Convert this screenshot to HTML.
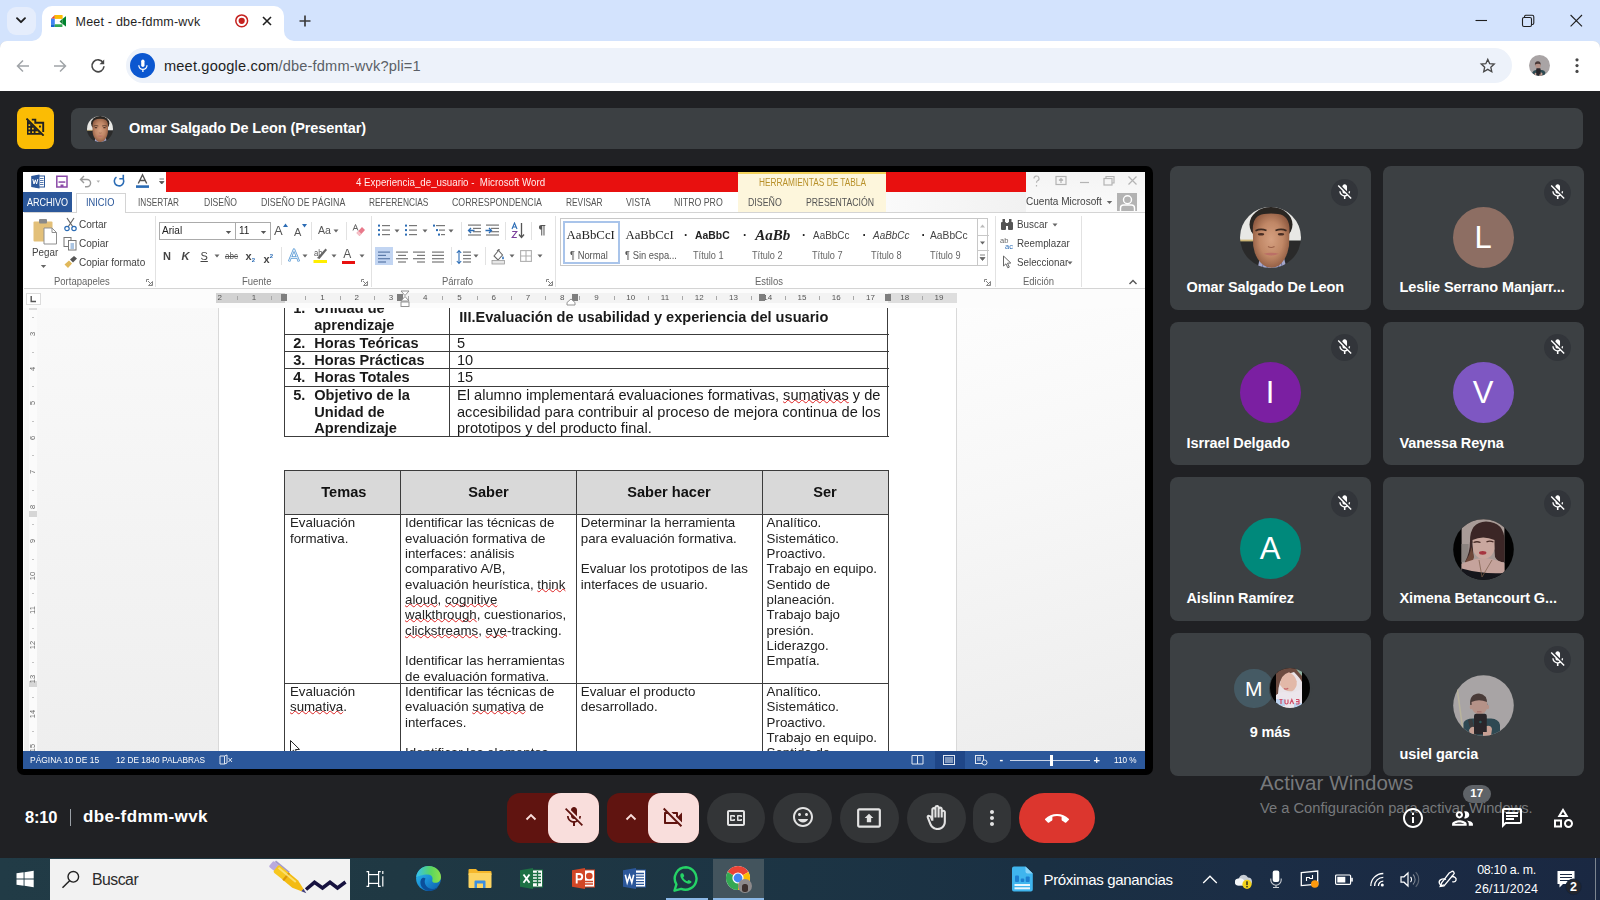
<!DOCTYPE html>
<html lang="es">
<head>
<meta charset="utf-8">
<title>Meet - dbe-fdmm-wvk</title>
<style>
*{box-sizing:border-box;margin:0;padding:0}
html,body{width:1600px;height:900px;overflow:hidden;background:#202124;font-family:"Liberation Sans",sans-serif;}
.abs{position:absolute}
#root{position:relative;width:1600px;height:900px;overflow:hidden}
/* chrome */
#tabstrip{left:0;top:0;width:1600px;height:52px;background:#d3e3fd}
#toolbar{left:0;top:41px;width:1600px;height:49.500px;background:#fff;border-radius:7px 7px 0 0;box-shadow:0 0.5px 0 0.5px #d5d7da}
#tab{left:42px;top:6px;width:242px;height:35px;background:#fff;border-radius:10px 10px 0 0}
#urlbar{left:126px;top:48px;width:1386px;height:35px;border-radius:18px;background:#edf2fa}
/* meet */
#meet{left:0;top:90.700px;width:1600px;height:767.800px;background:#202124}
.tile{background:#3c4043;border-radius:8px}
.tname{color:#fff;font-weight:bold;font-size:14.5px;white-space:nowrap;letter-spacing:-0.1px}
.micoff{width:27px;height:27px;border-radius:50%;background:#32353a;margin-left:0.3px}
.av{border-radius:50%;color:#fff;text-align:center}
.sq{text-decoration:underline wavy #d22 0.8px;text-underline-offset:-0.5px;text-decoration-skip-ink:none}
/* taskbar */
#taskbar{left:0;top:858.300px;width:1600px;height:41.700px;background:linear-gradient(90deg,#213b46 0%,#1f3843 25%,#1c3444 50%,#1a3043 65%,#1b2d45 78%,#1a2842 100%)}
</style>
</head>
<body>
<div id="root">
<!-- CHROME -->
<div id="tabstrip" class="abs"></div>
<div id="toolbar" class="abs"></div>
<div class="abs" style="left:7px;top:7px;width:29px;height:28px;border-radius:9px;background:#e5edfc"></div>
<svg class="abs" style="left:15px;top:16px" width="12" height="9" viewBox="0 0 12 9"><path d="M2 2.2 L6 6.2 L10 2.2" fill="none" stroke="#1f1f1f" stroke-width="1.9" stroke-linecap="round" stroke-linejoin="round"/></svg>
<div id="tab" class="abs"></div>
<svg class="abs" style="left:32px;top:31px" width="10" height="10" viewBox="0 0 10 10"><path d="M0 10 H10 V0 A10 10 0 0 1 0 10Z" fill="#fff"/></svg>
<svg class="abs" style="left:284px;top:31px" width="10" height="10" viewBox="0 0 10 10"><path d="M10 10 H0 V0 A10 10 0 0 0 10 10Z" fill="#fff"/></svg>
<!-- favicon -->
<svg class="abs" style="left:50.500px;top:14.500px" width="15.700" height="12.800" viewBox="0 0 16.500 14" preserveAspectRatio="none">
<path d="M0 4 L4 0 V4Z" fill="#ea4335"/>
<rect x="4" y="0" width="8" height="4" fill="#fbbc04"/>
<path d="M4 0 H11 a1 1 0 0 1 1 1 V4 H4Z" fill="#fbbc04"/>
<rect x="0" y="4" width="4" height="6" fill="#4285f4"/>
<path d="M0 10 H4 V14 H1 a1 1 0 0 1-1-1Z" fill="#1967d2"/>
<path d="M4 10 H12 V13 a1 1 0 0 1-1 1 H4Z" fill="#34a853"/>
<path d="M9 7 L12 4 V10Z" fill="#188038"/>
<path d="M12 4.3 L15.6 1.4 q0.6-.4 .6 .4 V12.2 q0 .8-.6 .4 L12 9.700Z" fill="#00832d"/>
<path d="M9 4 H12 V10 H9 L9 7Z" fill="#00ac47" opacity="0"/>
</svg>
<div class="abs" style="left:75.500px;top:13.500px;font-size:12.500px;letter-spacing:0.22px;color:#1f1f1f;white-space:nowrap;line-height:16px" id="tabtitle">Meet - dbe-fdmm-wvk</div>
<svg class="abs" style="left:234px;top:13px" width="16" height="16" viewBox="0 0 16 16"><circle cx="7.7" cy="7.8" r="5.9" fill="none" stroke="#c5221f" stroke-width="1.5"/><circle cx="7.7" cy="7.8" r="3.1" fill="#c5221f"/></svg>
<svg class="abs" style="left:261px;top:15px" width="12" height="12" viewBox="0 0 12 12"><path d="M2 2 L10 10 M10 2 L2 10" stroke="#1f1f1f" stroke-width="1.6" stroke-linecap="butt"/></svg>
<svg class="abs" style="left:298px;top:14px" width="14" height="14" viewBox="0 0 14 14"><path d="M7 1.5 V12.500 M1.500 7 H12.500" stroke="#3c3c3c" stroke-width="1.7"/></svg>
<!-- window controls -->
<svg class="abs" style="left:1470px;top:10px" width="120" height="22" viewBox="0 0 120 22">
<path d="M5.500 10.500 H17" stroke="#1f1f1f" stroke-width="1.100"/>
<rect x="52.500" y="7.500" width="9" height="9" rx="1.500" fill="none" stroke="#1f1f1f" stroke-width="1.100"/>
<path d="M54.500 7.500 V6.700 a1.500 1.500 0 0 1 1.500 -1.500 H62.300 a1.500 1.500 0 0 1 1.500 1.500 V13 a1.500 1.500 0 0 1 -1.500 1.500 H61.500" fill="none" stroke="#1f1f1f" stroke-width="1.100"/>
<path d="M100.600 5 L112 16.300 M112 5 L100.600 16.300" stroke="#1f1f1f" stroke-width="1.100"/>
</svg>
<!-- nav -->
<svg class="abs" style="left:15px;top:58px" width="16" height="16" viewBox="0 0 16 16"><path d="M14 8 H2.800 M8 2.500 L2.500 8 L8 13.500" fill="none" stroke="#a0a4a8" stroke-width="1.500"/></svg>
<svg class="abs" style="left:52px;top:58px" width="16" height="16" viewBox="0 0 16 16"><path d="M2 8 H13.200 M8 2.500 L13.500 8 L8 13.500" fill="none" stroke="#a0a4a8" stroke-width="1.500"/></svg>
<svg class="abs" style="left:89px;top:57px" width="18" height="18" viewBox="0 0 18 18"><path d="M14.200 5.800 A6 6 0 1 0 15 9.300" fill="none" stroke="#474747" stroke-width="1.600"/><path d="M15.200 2.500 V7.200 H10.500Z" fill="#474747"/></svg>
<div id="urlbar" class="abs"></div>
<div class="abs" style="left:130px;top:53px;width:25px;height:25px;border-radius:50%;background:#0b57d0"></div>
<svg class="abs" style="left:136px;top:58px" width="14" height="16" viewBox="0 0 14 16"><rect x="5.200" y="1.500" width="3.300" height="7.500" rx="1.650" fill="#fff"/><path d="M2.800 7.300 a4.100 4.100 0 0 0 8.200 0 M6.900 11.400 V14" fill="none" stroke="#fff" stroke-width="1.300"/></svg>
<div class="abs" style="left:164px;top:56px;font-size:14.600px;letter-spacing:0.17px;color:#1f1f1f;white-space:nowrap;line-height:20px" id="urltext">meet.google.com<span style="color:#5a5f66">/dbe-fdmm-wvk?pli=1</span></div>
<svg class="abs" style="left:1478.900px;top:56.800px" width="17.500" height="17.500" viewBox="0 0 20 20"><path d="M10 2.700 L12.200 7.600 L17.400 8.100 L13.500 11.600 L14.600 16.800 L10 14.100 L5.400 16.800 L6.500 11.600 L2.600 8.100 L7.800 7.600Z" fill="none" stroke="#474747" stroke-width="1.500" stroke-linejoin="miter"/></svg>
<svg class="abs" style="left:1529px;top:55px" width="21" height="21" viewBox="0 0 61 61"><defs><clipPath id="cpp"><circle cx="30.500" cy="30.500" r="30.500"/></clipPath></defs><g clip-path="url(#cpp)"><rect width="61" height="61" fill="#a9a4a5"/><path d="M10.500 61 V50 Q12 44 20 43.500 H38 Q46 44 47 50 V61Z" fill="#2e4a52"/><path d="M17.200 30 Q16 19 26 18.500 Q34.500 19 34.300 30Z" fill="#4a3a38"/><path d="M18.500 27 Q26 23.500 34 27 L34 33 Q33 38.500 26.500 39.500 Q20 38.500 18.800 33Z" fill="#b59288"/><rect x="21" y="38.700" width="12.800" height="20.500" rx="2.200" fill="#29262a"/><path d="M16 55 Q18 51 21 52 V60 H17Z M33.800 51 Q38 50 39 54 L38 61 H30 V57 H33.800Z" fill="#c7a094"/></g></svg>
<svg class="abs" style="left:1573px;top:56px" width="8" height="20" viewBox="0 0 8 20"><circle cx="4" cy="3.800" r="1.600" fill="#474747"/><circle cx="4" cy="9.600" r="1.600" fill="#474747"/><circle cx="4" cy="15.400" r="1.600" fill="#474747"/></svg>
<!-- MEET -->
<div id="meet" class="abs"></div>
<div class="abs" style="left:16.700px;top:107.200px;width:37.500px;height:42px;border-radius:8px;background:#fbbc04"></div>
<svg class="abs" style="left:26px;top:117.800px" width="18.500" height="18.500" viewBox="0 0 18.500 18.500"><path d="M1 2.200 L15.500 16.700 H1Z" fill="#1f2023"/><g fill="#fbbc04"><rect x="2.500" y="6.300" width="1.700" height="1.700"/><rect x="2.500" y="9.800" width="1.700" height="1.700"/><rect x="6" y="9.800" width="1.700" height="1.700"/><rect x="2.500" y="13.300" width="1.700" height="1.700"/><rect x="6" y="13.300" width="1.700" height="1.700"/><rect x="9.500" y="13.300" width="3" height="1.700"/></g><path d="M5.800 1.600 H9.300 V4.800 H17.200 V14" fill="none" stroke="#1f2023" stroke-width="1.900"/><rect x="13" y="7.600" width="1.900" height="1.900" fill="#1f2023"/><path d="M.5 .6 L17.600 17.700" stroke="#1f2023" stroke-width="1.900"/></svg>
<div class="abs" style="left:71px;top:107.600px;width:1512.300px;height:41.200px;border-radius:8px;background:#3c4043"></div>
<svg class="abs" id="av-hdr2" style="left:87.300px;top:115.500px" width="26" height="26" viewBox="0 0 61 61"><defs><clipPath id="cph"><circle cx="30.500" cy="30.500" r="30.500"/></clipPath><radialGradient id="skh" cx="50%" cy="48%" r="58%"><stop offset="0" stop-color="#d5a080"/><stop offset=".55" stop-color="#c08766"/><stop offset="1" stop-color="#8a563d"/></radialGradient><filter id="blh" x="-10%" y="-10%" width="120%" height="120%"><feGaussianBlur stdDeviation="1.1"/></filter></defs><g clip-path="url(#cph)"><g filter="url(#blh)"><rect x="-3" y="-3" width="67" height="67" fill="#e8e8e5"/><rect x="-3" y="33.500" width="67" height="32" fill="#2a2c2b"/><rect x="-2" y="32.600" width="15" height="1.800" fill="#cdb574"/><path d="M17 64 L21 46 H43 L47 64Z" fill="#a3a6cb"/><path d="M22 64 L24 50 M27 64 L27.500 52 M39 64 L37 50 M43 64 L40 50" stroke="#6f7299" stroke-width="1"/><ellipse cx="31" cy="17.500" rx="21.500" ry="17.500" fill="#2b2623"/><path d="M12.800 23 Q12.500 8.500 24 7 Q31 5.800 38 7 Q49.500 8.500 49.500 23 L49 39 Q47 52 39 58.500 Q31 63 24 58.500 Q15 52 13.200 39Z" fill="url(#skh)"/><path d="M15.500 23.800 Q20.500 21.300 26.500 23.500 M35.500 23.500 Q41.500 21.300 46.500 23.800" fill="none" stroke="#3b2920" stroke-width="1.700"/><ellipse cx="21" cy="27.300" rx="3.200" ry="1.200" fill="#4a2f25"/><ellipse cx="41" cy="27.300" rx="3.200" ry="1.200" fill="#4a2f25"/><path d="M28 39.500 Q31 41.500 34.500 39.500" fill="none" stroke="#9a6048" stroke-width="1.200"/><path d="M23.500 46.800 Q31 44.800 39 46.800 Q31 50.300 23.500 46.800Z" fill="#bb6f66"/></g></g></svg>
<div class="abs tname" id="hdrname" style="left:129px;top:119px;line-height:18px">Omar Salgado De Leon (Presentar)</div>
<!-- WORD -->
<div class="abs" style="left:17px;top:166px;width:1135.5px;height:608.700px;border-radius:7px;background:#000"></div>
<div id="word" class="abs" style="left:0;top:0;width:1600px;height:900px;clip-path:inset(171.5px 455px 131px 23px);filter:blur(0.35px)">
<div class="abs" style="left:23px;top:171.5px;width:1122px;height:597.5px;background:#fff"></div>
<div class="abs" style="left:166px;top:171.5px;width:859.5px;height:20.5px;background:#e8100f"></div>
<div class="abs" style="left:1025.5px;top:171.5px;width:119.5px;height:40.5px;background:linear-gradient(180deg,#f4f4f4,#fbfbfb)"></div>
<div class="abs" style="left:885.5px;top:192px;width:140px;height:20px;background:linear-gradient(90deg,#fafafa,#f1f1f1)"></div>
<div class="abs" style="left:738px;top:171.5px;width:147.5px;height:40.5px;background:#fdf6dc"></div>
<div class="abs" style="left:738px;top:171.5px;width:147.5px;height:2px;background:#f3d25a"></div>
<div class="abs " style="left:356px;top:175.95px;font-size:10.2px;line-height:13.3px;color:#ffecec;white-space:nowrap;transform:scaleX(0.955);transform-origin:left center;">4 Experiencia_de_usuario -&nbsp; Microsoft Word</div>
<div class="abs " style="left:758.5px;top:175.5px;font-size:10px;line-height:13.0px;color:#b8912a;white-space:nowrap;transform:scaleX(0.83);transform-origin:left center;">HERRAMIENTAS DE TABLA</div>
<svg class="abs" style="left:30px;top:172.500px" width="135" height="17" viewBox="0 0 135 17">
<rect x="6" y="3" width="8.500" height="11" fill="#fff" stroke="#2b579a" stroke-width="1"/><path d="M10 5.500 h3.500 M10 7.500 h3.500 M10 9.500 h3.500 M10 11.500 h3.500" stroke="#2b579a" stroke-width=".8"/><path d="M1.200 3 L9.500 1.500 V15.500 L1.200 14Z" fill="#2b579a"/><path d="M2.800 6 L4 11 L5.300 6.800 L6.600 11 L7.800 6" fill="none" stroke="#fff" stroke-width="1"/>
<path d="M26.800 3.300 H37 V14 H26.800Z" fill="none" stroke="#8a4aa8" stroke-width="1.500"/><rect x="28.500" y="8.300" width="6.800" height="1.500" fill="#8a4aa8"/><rect x="30.500" y="11.500" width="3" height="2.500" fill="#8a4aa8"/>
<path d="M50.500 6.500 H57 a3.600 3.600 0 0 1 0 7.200 H55 M54 3 L50.500 6.500 L54 10" fill="none" stroke="#9a9a9a" stroke-width="1.400"/><path d="M66.500 7.500 h3.600 l-1.800 2.200z" fill="#b0b0b0"/>
<path d="M92.500 5 a4.700 4.700 0 1 1 -6 -.8 M93.300 1.800 V5.800 H89.300" fill="none" stroke="#2b6cb5" stroke-width="1.600"/>
<path d="M108.300 10.500 L112.500 1.800 L116.700 10.500 M110 7.500 H115" fill="none" stroke="#555" stroke-width="1.400"/><rect x="106" y="12.300" width="13" height="2.600" fill="#2b6cb5"/>
<path d="M129.500 6 h4.500 M129.500 8.500 h4.500 l-2.250 2.500z" fill="#555" stroke="#555" stroke-width=".8"/>
</svg>
<svg class="abs" style="left:1028px;top:173px" width="115" height="17" viewBox="0 0 115 17"><g fill="none" stroke="#b4b4b4" stroke-width="1.200"><path d="M6 5.500 a2.500 2.500 0 1 1 3.500 2.300 q-1 .5 -1 2 M8.500 12 v1.500"/><rect x="28" y="3.500" width="10" height="8"/><path d="M33 10 V6 M31 7.500 L33 5.500 L35 7.500"/><path d="M52 9.500 H61"/><rect x="76" y="5.500" width="8" height="6.500"/><path d="M78 5.500 V3.500 H86 V10 H84"/><path d="M100.500 3.500 L108.500 11.500 M108.500 3.500 L100.500 11.500"/></g></svg>
<div class="abs" style="left:23px;top:192px;width:48.5px;height:20px;background:#2b579a"></div>
<div class="abs" style="left:75.5px;top:192.5px;width:50.5px;height:20px;background:#fff;border:1px solid #d4d4d4;border-bottom:none"></div>
<div class="abs" style="left:23.5px;top:212px;width:1121.5px;height:1px;background:#d4d4d4"></div>
<div class="abs" style="left:76.5px;top:212px;width:48.5px;height:1px;background:#fff"></div>
<div class="abs " style="left:26.9px;top:195.55px;font-size:10.4px;line-height:13.5px;color:#fff;white-space:nowrap;transform:scaleX(0.868);transform-origin:left center;">ARCHIVO</div>
<div class="abs " style="left:85.6px;top:195.55px;font-size:10.4px;line-height:13.5px;color:#2b579a;white-space:nowrap;transform:scaleX(0.894);transform-origin:left center;">INICIO</div>
<div class="abs " style="left:138.4px;top:195.55px;font-size:10.4px;line-height:13.5px;color:#555;white-space:nowrap;transform:scaleX(0.793);transform-origin:left center;">INSERTAR</div>
<div class="abs " style="left:203.5px;top:195.55px;font-size:10.4px;line-height:13.5px;color:#555;white-space:nowrap;transform:scaleX(0.828);transform-origin:left center;">DISEÑO</div>
<div class="abs " style="left:260.7px;top:195.55px;font-size:10.4px;line-height:13.5px;color:#555;white-space:nowrap;transform:scaleX(0.849);transform-origin:left center;">DISEÑO DE PÁGINA</div>
<div class="abs " style="left:368.6px;top:195.55px;font-size:10.4px;line-height:13.5px;color:#555;white-space:nowrap;transform:scaleX(0.804);transform-origin:left center;">REFERENCIAS</div>
<div class="abs " style="left:451.8px;top:195.55px;font-size:10.4px;line-height:13.5px;color:#555;white-space:nowrap;transform:scaleX(0.847);transform-origin:left center;">CORRESPONDENCIA</div>
<div class="abs " style="left:566px;top:195.55px;font-size:10.4px;line-height:13.5px;color:#555;white-space:nowrap;transform:scaleX(0.802);transform-origin:left center;">REVISAR</div>
<div class="abs " style="left:625.5px;top:195.55px;font-size:10.4px;line-height:13.5px;color:#555;white-space:nowrap;transform:scaleX(0.838);transform-origin:left center;">VISTA</div>
<div class="abs " style="left:674px;top:195.55px;font-size:10.4px;line-height:13.5px;color:#555;white-space:nowrap;transform:scaleX(0.844);transform-origin:left center;">NITRO PRO</div>
<div class="abs " style="left:748px;top:195.55px;font-size:10.4px;line-height:13.5px;color:#555;white-space:nowrap;transform:scaleX(0.848);transform-origin:left center;">DISEÑO</div>
<div class="abs " style="left:806px;top:195.55px;font-size:10.4px;line-height:13.5px;color:#555;white-space:nowrap;transform:scaleX(0.837);transform-origin:left center;">PRESENTACIÓN</div>
<div class="abs " style="left:1026.2px;top:195.3px;font-size:10.3px;line-height:13.4px;color:#444;white-space:nowrap;transform:scaleX(0.975);transform-origin:left center;">Cuenta Microsoft</div>
<svg class="abs" style="left:1106px;top:200px" width="7" height="5" viewBox="0 0 7 5"><path d="M.8 1 h5.400 l-2.700 3z" fill="#666"/></svg>
<div class="abs" style="left:1117px;top:192.5px;width:20px;height:18.5px;background:#b3b3b3"></div>
<svg class="abs" style="left:1117px;top:192.500px" width="20" height="18.500" viewBox="0 0 20 18.500"><circle cx="10.500" cy="6.800" r="4" fill="none" stroke="#fff" stroke-width="1.400"/><path d="M3.500 18.500 V15 a3 3 0 0 1 3 -3 H14.500 a3 3 0 0 1 3 3 V18.500" fill="none" stroke="#fff" stroke-width="1.400"/></svg>
<div class="abs" style="left:23.5px;top:288px;width:1121.5px;height:1px;background:#d4d4d4"></div>
<div class="abs" style="left:155.3px;top:216px;width:1px;height:71px;background:#e2e2e2"></div>
<div class="abs" style="left:371.2px;top:216px;width:1px;height:71px;background:#e2e2e2"></div>
<div class="abs" style="left:555.4px;top:216px;width:1px;height:71px;background:#e2e2e2"></div>
<div class="abs" style="left:994.7px;top:216px;width:1px;height:71px;background:#e2e2e2"></div>
<div class="abs" style="left:1081px;top:216px;width:1px;height:71px;background:#e2e2e2"></div>
<div class="abs " style="left:54.4px;top:274.85px;font-size:10.2px;line-height:13.3px;color:#666;white-space:nowrap;transform:scaleX(0.93);transform-origin:left center;">Portapapeles</div>
<div class="abs " style="left:241.8px;top:274.85px;font-size:10.2px;line-height:13.3px;color:#666;white-space:nowrap;transform:scaleX(0.93);transform-origin:left center;">Fuente</div>
<div class="abs " style="left:441.6px;top:274.85px;font-size:10.2px;line-height:13.3px;color:#666;white-space:nowrap;transform:scaleX(0.93);transform-origin:left center;">Párrafo</div>
<div class="abs " style="left:755.3px;top:274.85px;font-size:10.2px;line-height:13.3px;color:#666;white-space:nowrap;transform:scaleX(0.93);transform-origin:left center;">Estilos</div>
<div class="abs " style="left:1022.5px;top:274.85px;font-size:10.2px;line-height:13.3px;color:#666;white-space:nowrap;transform:scaleX(0.93);transform-origin:left center;">Edición</div>
<svg class="abs" style="left:145.5px;top:278.500px" width="7" height="7" viewBox="0 0 7 7"><path d="M.5 3 V.5 H3 M6.500 2.500 V6.500 H2.500Z M2 2 L5.500 5.500" fill="none" stroke="#777" stroke-width=".9"/></svg>
<svg class="abs" style="left:360.8px;top:278.500px" width="7" height="7" viewBox="0 0 7 7"><path d="M.5 3 V.5 H3 M6.500 2.500 V6.500 H2.500Z M2 2 L5.500 5.500" fill="none" stroke="#777" stroke-width=".9"/></svg>
<svg class="abs" style="left:545.5px;top:278.500px" width="7" height="7" viewBox="0 0 7 7"><path d="M.5 3 V.5 H3 M6.500 2.500 V6.500 H2.500Z M2 2 L5.500 5.500" fill="none" stroke="#777" stroke-width=".9"/></svg>
<svg class="abs" style="left:984.3px;top:278.500px" width="7" height="7" viewBox="0 0 7 7"><path d="M.5 3 V.5 H3 M6.500 2.500 V6.500 H2.500Z M2 2 L5.500 5.500" fill="none" stroke="#777" stroke-width=".9"/></svg>
<svg class="abs" style="left:1128px;top:278px" width="10" height="8" viewBox="0 0 10 8"><path d="M1.500 6 L5 2.500 L8.500 6" fill="none" stroke="#555" stroke-width="1.400"/></svg>
<svg class="abs" style="left:32px;top:218px" width="27" height="27" viewBox="0 0 27 27"><rect x="1.500" y="3.500" width="19" height="20" rx="1" fill="#e3c079"/><rect x="7" y="1" width="8" height="4.500" rx="1" fill="#8a8a8a"/><path d="M12 10 H20 L24.500 14.500 V26 H12Z" fill="#fff" stroke="#8f8f8f" stroke-width="1"/><path d="M20 10 V14.500 H24.500" fill="none" stroke="#8f8f8f" stroke-width="1"/></svg>
<div class="abs " style="left:31.6px;top:246.3px;font-size:10.6px;line-height:13.8px;color:#444;white-space:nowrap;transform:scaleX(0.93);transform-origin:left center;">Pegar</div>
<svg class="abs" style="left:40px;top:263.500px" width="7" height="5" viewBox="0 0 7 5"><path d="M.8 1 h5.400 l-2.700 3z" fill="#666"/></svg>
<svg class="abs" style="left:63px;top:217px" width="15" height="15" viewBox="0 0 15 15"><path d="M4 1 L10 10 M11 1 L5 10" stroke="#666" stroke-width="1.200"/><circle cx="4" cy="11.500" r="2.200" fill="none" stroke="#2b6cb5" stroke-width="1.200"/><circle cx="11" cy="11.500" r="2.200" fill="none" stroke="#2b6cb5" stroke-width="1.200"/></svg>
<svg class="abs" style="left:63px;top:236px" width="15" height="15" viewBox="0 0 15 15"><rect x="1" y="1.500" width="7" height="9" fill="#fff" stroke="#777" stroke-width="1"/><rect x="5.500" y="4.500" width="7.500" height="9.500" fill="#fff" stroke="#777" stroke-width="1"/><path d="M7.500 8 h3.500 M7.500 10 h3.500 M7.500 12 h3.500" stroke="#2b6cb5" stroke-width=".8"/></svg>
<svg class="abs" style="left:63px;top:255px" width="15" height="15" viewBox="0 0 15 15"><path d="M1.500 9.500 L6 5.500 L9 8.500 L5 13Z" fill="#e0b85a"/><path d="M7 4.500 L11 1 L14 3.500 L10 7.500Z" fill="#555"/></svg>
<div class="abs " style="left:79.4px;top:218.1px;font-size:10.6px;line-height:13.8px;color:#444;white-space:nowrap;transform:scaleX(0.95);transform-origin:left center;">Cortar</div>
<div class="abs " style="left:79.4px;top:236.9px;font-size:10.6px;line-height:13.8px;color:#444;white-space:nowrap;transform:scaleX(0.95);transform-origin:left center;">Copiar</div>
<div class="abs " style="left:79.4px;top:255.7px;font-size:10.6px;line-height:13.8px;color:#444;white-space:nowrap;transform:scaleX(0.945);transform-origin:left center;">Copiar formato</div>
<div class="abs" style="left:159px;top:221.8px;width:76.5px;height:18.7px;border:1px solid #ababab;background:#fff"></div>
<div class="abs" style="left:235.5px;top:221.8px;width:35.3px;height:18.7px;border:1px solid #ababab;border-left:none;background:#fff"></div>
<div class="abs " style="left:161.5px;top:224.3px;font-size:10.6px;line-height:13.8px;color:#222;white-space:nowrap;transform:scaleX(0.95);transform-origin:left center;">Arial</div>
<div class="abs " style="left:238.5px;top:224.3px;font-size:10.6px;line-height:13.8px;color:#222;white-space:nowrap;transform:scaleX(0.95);transform-origin:left center;">11</div>
<svg class="abs" style="left:224.5px;top:229.500px" width="7" height="5" viewBox="0 0 7 5"><path d="M.8 1 h5.400 l-2.700 3z" fill="#555"/></svg>
<svg class="abs" style="left:260.0px;top:229.500px" width="7" height="5" viewBox="0 0 7 5"><path d="M.8 1 h5.400 l-2.700 3z" fill="#555"/></svg>
<div class="abs " style="left:274px;top:222.55px;font-size:13px;line-height:16.9px;color:#555;white-space:nowrap;">A</div>
<svg class="abs" style="left:283px;top:223px" width="5" height="4" viewBox="0 0 5 4"><path d="M0 4 h5 l-2.500 -3.500z" fill="#2b6cb5"/></svg>
<div class="abs " style="left:294px;top:224.85px;font-size:11px;line-height:14.3px;color:#555;white-space:nowrap;">A</div>
<svg class="abs" style="left:301.500px;top:223.500px" width="5" height="4" viewBox="0 0 5 4"><path d="M0 0 h5 l-2.500 3.500z" fill="#2b6cb5"/></svg>
<div class="abs" style="left:311px;top:222px;width:1px;height:18px;background:#e2e2e2"></div>
<div class="abs " style="left:317.8px;top:223.0px;font-size:11.5px;line-height:15.0px;color:#555;white-space:nowrap;transform:scaleX(0.92);transform-origin:left center;">Aa</div>
<svg class="abs" style="left:332.6px;top:229px" width="6" height="4" viewBox="0 0 6 4"><path d="M.5 .5 h5 l-2.500 3z" fill="#666"/></svg>
<div class="abs" style="left:346px;top:222px;width:1px;height:18px;background:#e2e2e2"></div>
<svg class="abs" style="left:352px;top:223px" width="14" height="14" viewBox="0 0 14 14"><path d="M1 7.500 L3.500 1.500 L6 7.500 M2 5.500 H5" fill="none" stroke="#666" stroke-width="1"/><path d="M4.500 10 L10 4 L13 7 L7.500 13Z" fill="#e8798a"/><path d="M4.500 10 L6.500 8 L9.500 11 L7.500 13Z" fill="#f4c2c9"/></svg>
<div class="abs " style="left:163px;top:249.05px;font-size:11px;line-height:14.3px;color:#444;white-space:nowrap;font-weight:bold;">N</div>
<div class="abs " style="left:181.5px;top:249.05px;font-size:11px;line-height:14.3px;color:#444;white-space:nowrap;font-weight:bold;font-style:italic;">K</div>
<div class="abs " style="left:200.5px;top:249.05px;font-size:11px;line-height:14.3px;color:#444;white-space:nowrap;text-decoration:underline;">S</div>
<svg class="abs" style="left:214px;top:254px" width="6" height="4" viewBox="0 0 6 4"><path d="M.5 .5 h5 l-2.500 3z" fill="#666"/></svg>
<div class="abs " style="left:225px;top:250.05px;font-size:9.5px;line-height:12.3px;color:#555;white-space:nowrap;text-decoration:line-through;transform:scaleX(0.85);transform-origin:left center;">abc</div>
<div class="abs " style="left:245.5px;top:249.05px;font-size:11px;line-height:14.3px;color:#444;white-space:nowrap;font-weight:bold;">x<span style="font-size:6px;color:#2b6cb5;vertical-align:-2px">2</span></div>
<div class="abs " style="left:263.5px;top:249.05px;font-size:11px;line-height:14.3px;color:#444;white-space:nowrap;font-weight:bold;">x<span style="font-size:6px;color:#2b6cb5;vertical-align:5px">2</span></div>
<div class="abs" style="left:281px;top:247px;width:1px;height:18px;background:#e2e2e2"></div>
<svg class="abs" style="left:286.500px;top:248px" width="14" height="15" viewBox="0 0 14 15"><path d="M2 13.500 L7 1.500 L12 13.500 M4 9.500 H10" fill="none" stroke="#5b9bd5" stroke-width="2.400" stroke-linejoin="round"/><path d="M2 13.500 L7 1.500 L12 13.500 M4 9.500 H10" fill="none" stroke="#fff" stroke-width=".8"/></svg>
<svg class="abs" style="left:302px;top:254px" width="6" height="4" viewBox="0 0 6 4"><path d="M.5 .5 h5 l-2.500 3z" fill="#666"/></svg>
<div class="abs " style="left:314px;top:247.95px;font-size:8.5px;line-height:11.1px;color:#555;white-space:nowrap;transform:scaleX(0.9);transform-origin:left center;">ab</div>
<svg class="abs" style="left:313px;top:247px" width="15" height="17" viewBox="0 0 15 17"><path d="M4 11 L12.500 1.500 L14 3 L6.500 12Z" fill="#666"/><rect x=".5" y="13" width="13.500" height="3" fill="#ffee00"/></svg>
<svg class="abs" style="left:331px;top:254px" width="6" height="4" viewBox="0 0 6 4"><path d="M.5 .5 h5 l-2.500 3z" fill="#666"/></svg>
<div class="abs " style="left:343.3px;top:246.7px;font-size:12px;line-height:15.6px;color:#555;white-space:nowrap;">A</div>
<div class="abs" style="left:341.8px;top:260.5px;width:13px;height:3px;background:#e8100f"></div>
<svg class="abs" style="left:359px;top:254px" width="6" height="4" viewBox="0 0 6 4"><path d="M.5 .5 h5 l-2.500 3z" fill="#666"/></svg>
<svg class="abs" style="left:377.8px;top:223.3px" width="14" height="14" viewBox="0 0 14 14"><rect x="4" y="2" width="8" height="1.200" fill="#777"/><rect x="4" y="6.5" width="8" height="1.200" fill="#777"/><rect x="4" y="11" width="8" height="1.200" fill="#777"/><rect x="0" y="1.6" width="2" height="2" fill="#2b6cb5"/><rect x="0" y="6.1" width="2" height="2" fill="#2b6cb5"/><rect x="0" y="10.6" width="2" height="2" fill="#2b6cb5"/></svg>
<svg class="abs" style="left:394.2px;top:229px" width="6" height="4" viewBox="0 0 6 4"><path d="M.5 .5 h5 l-2.500 3z" fill="#666"/></svg>
<svg class="abs" style="left:405.4px;top:223.3px" width="14" height="14" viewBox="0 0 14 14"><rect x="4" y="2" width="8" height="1.200" fill="#777"/><rect x="4" y="6.5" width="8" height="1.200" fill="#777"/><rect x="4" y="11" width="8" height="1.200" fill="#777"/><rect x="0" y="1.6" width="2" height="2" fill="#2b6cb5"/><rect x="0" y="6.1" width="2" height="2" fill="#2b6cb5"/><rect x="0" y="10.6" width="2" height="2" fill="#2b6cb5"/></svg>
<svg class="abs" style="left:422px;top:229px" width="6" height="4" viewBox="0 0 6 4"><path d="M.5 .5 h5 l-2.500 3z" fill="#666"/></svg>
<svg class="abs" style="left:433px;top:223.3px" width="14" height="14" viewBox="0 0 14 14"><rect x="3" y="2" width="9" height="1.200" fill="#777"/><rect x="6" y="6.5" width="6" height="1.200" fill="#777"/><rect x="8" y="11" width="4" height="1.200" fill="#777"/><rect x="0" y="1.6" width="2" height="2" fill="#2b6cb5"/><rect x="3" y="6.1" width="2" height="2" fill="#2b6cb5"/><rect x="5" y="10.6" width="2" height="2" fill="#2b6cb5"/></svg>
<svg class="abs" style="left:448.4px;top:229px" width="6" height="4" viewBox="0 0 6 4"><path d="M.5 .5 h5 l-2.500 3z" fill="#666"/></svg>
<div class="abs" style="left:461px;top:222px;width:1px;height:18px;background:#e2e2e2"></div>
<svg class="abs" style="left:467.8px;top:223.3px" width="14" height="14" viewBox="0 0 14 14"><rect x="0" y="1.5" width="13" height="1.200" fill="#777"/><rect x="5" y="4.8" width="8" height="1.200" fill="#777"/><rect x="5" y="8.1" width="8" height="1.200" fill="#777"/><rect x="0" y="11.4" width="13" height="1.200" fill="#777"/></svg>
<svg class="abs" style="left:466.500px;top:227px" width="8" height="7" viewBox="0 0 8 7"><path d="M7.500 3.500 H1.500 M4 1 L1.500 3.500 L4 6" fill="none" stroke="#2b6cb5" stroke-width="1.300"/></svg>
<svg class="abs" style="left:485.6px;top:223.3px" width="14" height="14" viewBox="0 0 14 14"><rect x="0" y="1.5" width="13" height="1.200" fill="#777"/><rect x="5" y="4.8" width="8" height="1.200" fill="#777"/><rect x="5" y="8.1" width="8" height="1.200" fill="#777"/><rect x="0" y="11.4" width="13" height="1.200" fill="#777"/></svg>
<svg class="abs" style="left:484.500px;top:227px" width="8" height="7" viewBox="0 0 8 7"><path d="M.5 3.500 H6.500 M4 1 L6.500 3.500 L4 6" fill="none" stroke="#2b6cb5" stroke-width="1.300"/></svg>
<div class="abs" style="left:504.7px;top:222px;width:1px;height:18px;background:#e2e2e2"></div>
<svg class="abs" style="left:511px;top:222px" width="15" height="17" viewBox="0 0 15 17"><path d="M1 7 L3.500 1 L6 7 M2 5 H5" fill="none" stroke="#2b6cb5" stroke-width="1.100"/><path d="M1.200 9.500 H5.800 L1.200 15.500 H5.800" fill="none" stroke="#7a3d9a" stroke-width="1.100"/><path d="M10.500 1 V15 M8 12.500 L10.500 15.500 L13 12.500" fill="none" stroke="#555" stroke-width="1.300"/></svg>
<div class="abs" style="left:530.6px;top:222px;width:1px;height:18px;background:#e2e2e2"></div>
<div class="abs " style="left:538.5px;top:221.55px;font-size:13px;line-height:16.9px;color:#555;white-space:nowrap;font-weight:bold;">¶</div>
<div class="abs" style="left:374.6px;top:247.2px;width:18.2px;height:18.2px;background:#c2d5f2"></div>
<svg class="abs" style="left:377.5px;top:249.5px" width="14" height="14" viewBox="0 0 14 14"><rect x="0" y="1.5" width="12" height="1.200" fill="#5a79a8"/><rect x="0" y="4.8" width="8" height="1.200" fill="#5a79a8"/><rect x="0" y="8.1" width="12" height="1.200" fill="#5a79a8"/><rect x="0" y="11.4" width="8" height="1.200" fill="#5a79a8"/></svg>
<svg class="abs" style="left:396px;top:249.5px" width="14" height="14" viewBox="0 0 14 14"><rect x="0" y="1.5" width="12" height="1.200" fill="#777"/><rect x="2" y="4.8" width="8" height="1.200" fill="#777"/><rect x="0" y="8.1" width="12" height="1.200" fill="#777"/><rect x="2" y="11.4" width="8" height="1.200" fill="#777"/></svg>
<svg class="abs" style="left:413.4px;top:249.5px" width="14" height="14" viewBox="0 0 14 14"><rect x="0" y="1.5" width="12" height="1.200" fill="#777"/><rect x="4" y="4.8" width="8" height="1.200" fill="#777"/><rect x="0" y="8.1" width="12" height="1.200" fill="#777"/><rect x="4" y="11.4" width="8" height="1.200" fill="#777"/></svg>
<svg class="abs" style="left:431.6px;top:249.5px" width="14" height="14" viewBox="0 0 14 14"><rect x="0" y="1.5" width="12" height="1.200" fill="#777"/><rect x="0" y="4.8" width="12" height="1.200" fill="#777"/><rect x="0" y="8.1" width="12" height="1.200" fill="#777"/><rect x="0" y="11.4" width="12" height="1.200" fill="#777"/></svg>
<div class="abs" style="left:451px;top:247px;width:1px;height:18px;background:#e2e2e2"></div>
<svg class="abs" style="left:460.5px;top:249.5px" width="14" height="14" viewBox="0 0 14 14"><rect x="2" y="1.5" width="8" height="1.200" fill="#777"/><rect x="2" y="4.8" width="8" height="1.200" fill="#777"/><rect x="2" y="8.1" width="8" height="1.200" fill="#777"/><rect x="2" y="11.4" width="8" height="1.200" fill="#777"/></svg>
<svg class="abs" style="left:456px;top:248.500px" width="6" height="16" viewBox="0 0 6 16"><path d="M3 1.500 V14.500 M.8 4 L3 1.500 L5.200 4 M.8 12 L3 14.500 L5.200 12" fill="none" stroke="#2b6cb5" stroke-width="1.100"/></svg>
<svg class="abs" style="left:472.6px;top:254px" width="6" height="4" viewBox="0 0 6 4"><path d="M.5 .5 h5 l-2.500 3z" fill="#666"/></svg>
<div class="abs" style="left:485.2px;top:247px;width:1px;height:18px;background:#e2e2e2"></div>
<svg class="abs" style="left:490.500px;top:247.500px" width="15" height="17" viewBox="0 0 15 17"><path d="M3 8 L7.500 2.500 L11.500 7 L7 12Z" fill="#fff" stroke="#666" stroke-width="1.100"/><path d="M6 3 a2 2 0 0 1 3 -1" fill="none" stroke="#666" stroke-width="1"/><path d="M12 8 q1.800 2.500 0 3.500 q-1.800 -1 0 -3.500z" fill="#2b6cb5"/><rect x="1" y="12.500" width="12.500" height="3.500" fill="#e6e6e6" stroke="#999" stroke-width=".8"/></svg>
<svg class="abs" style="left:508.6px;top:254px" width="6" height="4" viewBox="0 0 6 4"><path d="M.5 .5 h5 l-2.500 3z" fill="#666"/></svg>
<svg class="abs" style="left:520px;top:250px" width="12" height="12" viewBox="0 0 12 12"><rect x=".6" y=".6" width="10.800" height="10.800" fill="none" stroke="#b0b0b0" stroke-width="1.100"/><path d="M6 .6 V11.400 M.6 6 H11.400" stroke="#b0b0b0" stroke-width="1.100"/></svg>
<svg class="abs" style="left:536.6px;top:254px" width="6" height="4" viewBox="0 0 6 4"><path d="M.5 .5 h5 l-2.500 3z" fill="#666"/></svg>
<div class="abs" style="left:560.3px;top:217.7px;width:428.2px;height:48.6px;border:1px solid #c8c8c8;background:#fff"></div>
<div class="abs" style="left:976.6px;top:217.7px;width:1px;height:48.6px;background:#c8c8c8"></div>
<div class="abs" style="left:976.6px;top:235.3px;width:12px;height:1px;background:#c8c8c8"></div>
<div class="abs" style="left:976.6px;top:250.3px;width:12px;height:1px;background:#c8c8c8"></div>
<svg class="abs" style="left:979px;top:223px" width="7" height="40" viewBox="0 0 7 40"><path d="M1 4.500 h5 l-2.500 -3z" fill="#bbb"/><path d="M1 18.500 h5 l-2.500 3z" fill="#666"/><path d="M1 32 h5 M1 34.500 h5 l-2.500 3z" fill="#666" stroke="#666" stroke-width=".8"/></svg>
<div class="abs" style="left:562.8px;top:221px;width:57px;height:42.5px;border:2px solid #a9c4ea;background:#fff"></div>
<div class="abs st1" style="left:566.5px;top:227.1px;font-size:12.8px;line-height:16.6px;color:#222;white-space:nowrap;font-family:'Liberation Serif',serif;transform:scaleX(1.0);transform-origin:left center;">AaBbCcI</div>
<div class="abs " style="left:570.2px;top:249.35px;font-size:10.2px;line-height:13.3px;color:#555;white-space:nowrap;transform:scaleX(0.92);transform-origin:left center;">¶ Normal</div>
<div class="abs st2" style="left:625.4px;top:227.1px;font-size:12.8px;line-height:16.6px;color:#222;white-space:nowrap;font-family:'Liberation Serif',serif;">AaBbCcI</div>
<div class="abs " style="left:624.6px;top:249.35px;font-size:10.2px;line-height:13.3px;color:#555;white-space:nowrap;transform:scaleX(0.92);transform-origin:left center;">¶ Sin espa...</div>
<div class="abs " style="left:684px;top:227.6px;font-size:12px;line-height:15.6px;color:#222;white-space:nowrap;font-weight:bold;">·</div>
<div class="abs " style="left:695.3px;top:228.1px;font-size:11.2px;line-height:14.6px;color:#222;white-space:nowrap;font-weight:bold;transform:scaleX(0.93);transform-origin:left center;">AaBbC</div>
<div class="abs " style="left:693.4px;top:249.35px;font-size:10.2px;line-height:13.3px;color:#666;white-space:nowrap;transform:scaleX(0.9);transform-origin:left center;">Título 1</div>
<div class="abs " style="left:743px;top:227.6px;font-size:12px;line-height:15.6px;color:#222;white-space:nowrap;font-weight:bold;">·</div>
<div class="abs " style="left:755.3px;top:225.85px;font-size:15px;line-height:19.5px;color:#222;white-space:nowrap;font-family:'Liberation Serif',serif;font-weight:bold;font-style:italic;transform:scaleX(1.0);transform-origin:left center;">AaBb</div>
<div class="abs " style="left:752px;top:249.35px;font-size:10.2px;line-height:13.3px;color:#666;white-space:nowrap;transform:scaleX(0.9);transform-origin:left center;">Título 2</div>
<div class="abs " style="left:802px;top:227.6px;font-size:12px;line-height:15.6px;color:#222;white-space:nowrap;font-weight:bold;">·</div>
<div class="abs " style="left:813.4px;top:228.4px;font-size:10.8px;line-height:14.0px;color:#444;white-space:nowrap;transform:scaleX(0.92);transform-origin:left center;">AaBbCc</div>
<div class="abs " style="left:811.6px;top:249.35px;font-size:10.2px;line-height:13.3px;color:#666;white-space:nowrap;transform:scaleX(0.9);transform-origin:left center;">Título 7</div>
<div class="abs " style="left:862.5px;top:227.6px;font-size:12px;line-height:15.6px;color:#222;white-space:nowrap;font-weight:bold;">·</div>
<div class="abs " style="left:872.5px;top:228.4px;font-size:10.8px;line-height:14.0px;color:#444;white-space:nowrap;font-style:italic;transform:scaleX(0.92);transform-origin:left center;">AaBbCc</div>
<div class="abs " style="left:870.6px;top:249.35px;font-size:10.2px;line-height:13.3px;color:#666;white-space:nowrap;transform:scaleX(0.9);transform-origin:left center;">Título 8</div>
<div class="abs " style="left:921.5px;top:227.6px;font-size:12px;line-height:15.6px;color:#222;white-space:nowrap;font-weight:bold;">·</div>
<div class="abs " style="left:930.2px;top:228.4px;font-size:10.8px;line-height:14.0px;color:#444;white-space:nowrap;transform:scaleX(0.95);transform-origin:left center;">AaBbCc</div>
<div class="abs " style="left:929.7px;top:249.35px;font-size:10.2px;line-height:13.3px;color:#666;white-space:nowrap;transform:scaleX(0.9);transform-origin:left center;">Título 9</div>
<svg class="abs" style="left:1000px;top:218px" width="14" height="13" viewBox="0 0 14 13"><rect x="1" y="4" width="5" height="8" rx="1" fill="#555"/><rect x="8" y="4" width="5" height="8" rx="1" fill="#555"/><rect x="2.500" y="1" width="2.500" height="4" fill="#555"/><rect x="9" y="1" width="2.500" height="4" fill="#555"/><rect x="5.500" y="5" width="3" height="3" fill="#555"/></svg>
<div class="abs " style="left:1016.5px;top:218.1px;font-size:10.6px;line-height:13.8px;color:#444;white-space:nowrap;transform:scaleX(0.93);transform-origin:left center;">Buscar</div>
<svg class="abs" style="left:1052.3px;top:223px" width="6" height="4" viewBox="0 0 6 4"><path d="M.5 .5 h5 l-2.500 3z" fill="#666"/></svg>
<svg class="abs" style="left:1000px;top:236px" width="15" height="15" viewBox="0 0 15 15"></svg>
<div class="abs " style="left:1000px;top:235.6px;font-size:7.5px;line-height:9.8px;color:#666;white-space:nowrap;">ab</div>
<div class="abs " style="left:1005px;top:242.1px;font-size:7.5px;line-height:9.8px;color:#2b6cb5;white-space:nowrap;">ac</div>
<div class="abs " style="left:1016.5px;top:236.8px;font-size:10.6px;line-height:13.8px;color:#444;white-space:nowrap;transform:scaleX(0.925);transform-origin:left center;">Reemplazar</div>
<svg class="abs" style="left:1002px;top:255px" width="10" height="14" viewBox="0 0 10 14"><path d="M1.500 1 V11 L4 8.800 L5.800 12.800 L7.300 12.100 L5.500 8.200 L8.800 8Z" fill="#fff" stroke="#666" stroke-width="1"/></svg>
<div class="abs " style="left:1016.5px;top:255.6px;font-size:10.6px;line-height:13.8px;color:#444;white-space:nowrap;transform:scaleX(0.925);transform-origin:left center;">Seleccionar</div>
<svg class="abs" style="left:1066.7px;top:261px" width="6" height="4" viewBox="0 0 6 4"><path d="M.5 .5 h5 l-2.500 3z" fill="#666"/></svg>
<div class="abs" style="left:23px;top:289px;width:1122px;height:19.5px;background:#fcfcfc"></div>
<div class="abs" style="left:26px;top:292.5px;width:15px;height:12.5px;background:#fff;border:1px solid #dcdcdc"></div>
<svg class="abs" style="left:30px;top:295px" width="7" height="8" viewBox="0 0 7 8"><path d="M1.200 1 V6.500 H6" fill="none" stroke="#555" stroke-width="1.400"/></svg>
<div class="abs" style="left:215.5px;top:293px;width:741.5px;height:9.5px;background:#f3f3f3"></div>
<div class="abs" style="left:215.5px;top:293px;width:69px;height:9.5px;background:#d2d2d2"></div>
<div class="abs" style="left:888px;top:293px;width:69px;height:9.5px;background:#dedede"></div>
<div class="abs" style="left:211.75px;top:292.500px;width:16px;text-align:center;font-size:8px;line-height:10px;color:#555">2</div>
<div class="abs" style="left:246.0px;top:292.500px;width:16px;text-align:center;font-size:8px;line-height:10px;color:#555">1</div>
<div class="abs" style="left:314.5px;top:292.500px;width:16px;text-align:center;font-size:8px;line-height:10px;color:#555">1</div>
<div class="abs" style="left:348.75px;top:292.500px;width:16px;text-align:center;font-size:8px;line-height:10px;color:#555">2</div>
<div class="abs" style="left:383.0px;top:292.500px;width:16px;text-align:center;font-size:8px;line-height:10px;color:#555">3</div>
<div class="abs" style="left:417.25px;top:292.500px;width:16px;text-align:center;font-size:8px;line-height:10px;color:#555">4</div>
<div class="abs" style="left:451.5px;top:292.500px;width:16px;text-align:center;font-size:8px;line-height:10px;color:#555">5</div>
<div class="abs" style="left:485.75px;top:292.500px;width:16px;text-align:center;font-size:8px;line-height:10px;color:#555">6</div>
<div class="abs" style="left:520.0px;top:292.500px;width:16px;text-align:center;font-size:8px;line-height:10px;color:#555">7</div>
<div class="abs" style="left:554.25px;top:292.500px;width:16px;text-align:center;font-size:8px;line-height:10px;color:#555">8</div>
<div class="abs" style="left:588.5px;top:292.500px;width:16px;text-align:center;font-size:8px;line-height:10px;color:#555">9</div>
<div class="abs" style="left:622.75px;top:292.500px;width:16px;text-align:center;font-size:8px;line-height:10px;color:#555">10</div>
<div class="abs" style="left:657.0px;top:292.500px;width:16px;text-align:center;font-size:8px;line-height:10px;color:#555">11</div>
<div class="abs" style="left:691.25px;top:292.500px;width:16px;text-align:center;font-size:8px;line-height:10px;color:#555">12</div>
<div class="abs" style="left:725.5px;top:292.500px;width:16px;text-align:center;font-size:8px;line-height:10px;color:#555">13</div>
<div class="abs" style="left:759.75px;top:292.500px;width:16px;text-align:center;font-size:8px;line-height:10px;color:#555">14</div>
<div class="abs" style="left:794.0px;top:292.500px;width:16px;text-align:center;font-size:8px;line-height:10px;color:#555">15</div>
<div class="abs" style="left:828.25px;top:292.500px;width:16px;text-align:center;font-size:8px;line-height:10px;color:#555">16</div>
<div class="abs" style="left:862.5px;top:292.500px;width:16px;text-align:center;font-size:8px;line-height:10px;color:#555">17</div>
<div class="abs" style="left:896.75px;top:292.500px;width:16px;text-align:center;font-size:8px;line-height:10px;color:#555">18</div>
<div class="abs" style="left:931.0px;top:292.500px;width:16px;text-align:center;font-size:8px;line-height:10px;color:#555">19</div>
<div class="abs" style="left:236.9px;top:296px;width:1px;height:3.5px;background:#a8a8a8"></div>
<div class="abs" style="left:271.1px;top:296px;width:1px;height:3.5px;background:#a8a8a8"></div>
<div class="abs" style="left:305.4px;top:296px;width:1px;height:3.5px;background:#a8a8a8"></div>
<div class="abs" style="left:339.6px;top:296px;width:1px;height:3.5px;background:#a8a8a8"></div>
<div class="abs" style="left:373.9px;top:296px;width:1px;height:3.5px;background:#a8a8a8"></div>
<div class="abs" style="left:408.1px;top:296px;width:1px;height:3.5px;background:#a8a8a8"></div>
<div class="abs" style="left:442.4px;top:296px;width:1px;height:3.5px;background:#a8a8a8"></div>
<div class="abs" style="left:476.6px;top:296px;width:1px;height:3.5px;background:#a8a8a8"></div>
<div class="abs" style="left:510.9px;top:296px;width:1px;height:3.5px;background:#a8a8a8"></div>
<div class="abs" style="left:545.1px;top:296px;width:1px;height:3.5px;background:#a8a8a8"></div>
<div class="abs" style="left:579.4px;top:296px;width:1px;height:3.5px;background:#a8a8a8"></div>
<div class="abs" style="left:613.6px;top:296px;width:1px;height:3.5px;background:#a8a8a8"></div>
<div class="abs" style="left:647.9px;top:296px;width:1px;height:3.5px;background:#a8a8a8"></div>
<div class="abs" style="left:682.1px;top:296px;width:1px;height:3.5px;background:#a8a8a8"></div>
<div class="abs" style="left:716.4px;top:296px;width:1px;height:3.5px;background:#a8a8a8"></div>
<div class="abs" style="left:750.6px;top:296px;width:1px;height:3.5px;background:#a8a8a8"></div>
<div class="abs" style="left:784.9px;top:296px;width:1px;height:3.5px;background:#a8a8a8"></div>
<div class="abs" style="left:819.1px;top:296px;width:1px;height:3.5px;background:#a8a8a8"></div>
<div class="abs" style="left:853.4px;top:296px;width:1px;height:3.5px;background:#a8a8a8"></div>
<div class="abs" style="left:887.6px;top:296px;width:1px;height:3.5px;background:#a8a8a8"></div>
<div class="abs" style="left:921.9px;top:296px;width:1px;height:3.5px;background:#a8a8a8"></div>
<div class="abs" style="left:281px;top:294px;width:6px;height:7px;background:#7e7e7e"></div>
<div class="abs" style="left:397px;top:294px;width:6px;height:7px;background:#7e7e7e"></div>
<div class="abs" style="left:759px;top:294px;width:6px;height:7px;background:#7e7e7e"></div>
<div class="abs" style="left:885px;top:294px;width:6px;height:7px;background:#7e7e7e"></div>
<div class="abs" style="left:572px;top:294px;width:6px;height:7px;background:#7e7e7e"></div>
<svg class="abs" style="left:399px;top:290px" width="12" height="20" viewBox="0 0 12 20"><path d="M2 1 H10 L6 5.500Z M6 6.500 L10 11 H2Z" fill="#fff" stroke="#888" stroke-width=".9"/><rect x="2" y="12" width="8" height="4.500" fill="#fff" stroke="#888" stroke-width=".9"/></svg>
<svg class="abs" style="left:566px;top:298px" width="11" height="8" viewBox="0 0 11 8"><path d="M1 7 H9 V4.500 L5 1 L1 4.500Z" fill="#fff" stroke="#888" stroke-width=".9"/></svg>
<div class="abs" id="doc" style="left:23.5px;top:308.300px;width:1121.5px;height:442.700px;overflow:hidden;background:linear-gradient(90deg,#fdfdfd 0%,#f6f6f6 100%)">
<div class="abs" style="left:194.0px;top:-8.3px;width:739.5px;height:460px;background:#fff;border-left:1px solid #d9d9d9;border-right:1px solid #d9d9d9"></div>
<div class="abs" style="left:933.5px;top:-8.3px;width:188px;height:460px;background:linear-gradient(165deg,#fdfdfd 0%,#f7f7f7 40%,#ececec 100%)"></div>
<div class="abs" style="left:-0.5px;top:-8.3px;width:194.5px;height:460px;background:linear-gradient(180deg,#f9f9f9,#eeeeee)"></div>
<div class="abs" style="left:5.0px;top:-8.3px;width:8.5px;height:460px;background:#fbfbfb"></div>
<div class="abs" style="left:5.0px;top:-8.3px;width:8.5px;height:10px;background:#dcdcdc"></div>
<div class="abs" style="left:5.0px;top:203.2px;width:8.5px;height:6px;background:#d6d6d6"></div>
<div class="abs" style="left:5.0px;top:372.7px;width:8.5px;height:6px;background:#d6d6d6"></div>
<div class="abs" style="left:2.5px;top:20.19999999999999px;width:14.500px;height:12px;font-size:7.500px;line-height:12px;color:#666;text-align:center;transform:rotate(-90deg)">3</div>
<div class="abs" style="left:8.5px;top:9.2px;width:2px;height:1px;background:#c4c4c4"></div>
<div class="abs" style="left:2.5px;top:54.69999999999999px;width:14.500px;height:12px;font-size:7.500px;line-height:12px;color:#666;text-align:center;transform:rotate(-90deg)">4</div>
<div class="abs" style="left:8.5px;top:43.7px;width:2px;height:1px;background:#c4c4c4"></div>
<div class="abs" style="left:2.5px;top:89.19999999999999px;width:14.500px;height:12px;font-size:7.500px;line-height:12px;color:#666;text-align:center;transform:rotate(-90deg)">5</div>
<div class="abs" style="left:8.5px;top:78.2px;width:2px;height:1px;background:#c4c4c4"></div>
<div class="abs" style="left:2.5px;top:123.69999999999999px;width:14.500px;height:12px;font-size:7.500px;line-height:12px;color:#666;text-align:center;transform:rotate(-90deg)">6</div>
<div class="abs" style="left:8.5px;top:112.7px;width:2px;height:1px;background:#c4c4c4"></div>
<div class="abs" style="left:2.5px;top:158.2px;width:14.500px;height:12px;font-size:7.500px;line-height:12px;color:#666;text-align:center;transform:rotate(-90deg)">7</div>
<div class="abs" style="left:8.5px;top:147.2px;width:2px;height:1px;background:#c4c4c4"></div>
<div class="abs" style="left:2.5px;top:192.7px;width:14.500px;height:12px;font-size:7.500px;line-height:12px;color:#666;text-align:center;transform:rotate(-90deg)">8</div>
<div class="abs" style="left:8.5px;top:181.7px;width:2px;height:1px;background:#c4c4c4"></div>
<div class="abs" style="left:2.5px;top:227.2px;width:14.500px;height:12px;font-size:7.500px;line-height:12px;color:#666;text-align:center;transform:rotate(-90deg)">9</div>
<div class="abs" style="left:8.5px;top:216.2px;width:2px;height:1px;background:#c4c4c4"></div>
<div class="abs" style="left:2.5px;top:261.7px;width:14.500px;height:12px;font-size:7.500px;line-height:12px;color:#666;text-align:center;transform:rotate(-90deg)">10</div>
<div class="abs" style="left:8.5px;top:250.7px;width:2px;height:1px;background:#c4c4c4"></div>
<div class="abs" style="left:2.5px;top:296.2px;width:14.500px;height:12px;font-size:7.500px;line-height:12px;color:#666;text-align:center;transform:rotate(-90deg)">11</div>
<div class="abs" style="left:8.5px;top:285.2px;width:2px;height:1px;background:#c4c4c4"></div>
<div class="abs" style="left:2.5px;top:330.7px;width:14.500px;height:12px;font-size:7.500px;line-height:12px;color:#666;text-align:center;transform:rotate(-90deg)">12</div>
<div class="abs" style="left:8.5px;top:319.7px;width:2px;height:1px;background:#c4c4c4"></div>
<div class="abs" style="left:2.5px;top:365.2px;width:14.500px;height:12px;font-size:7.500px;line-height:12px;color:#666;text-align:center;transform:rotate(-90deg)">13</div>
<div class="abs" style="left:8.5px;top:354.2px;width:2px;height:1px;background:#c4c4c4"></div>
<div class="abs" style="left:2.5px;top:399.7px;width:14.500px;height:12px;font-size:7.500px;line-height:12px;color:#666;text-align:center;transform:rotate(-90deg)">14</div>
<div class="abs" style="left:8.5px;top:388.7px;width:2px;height:1px;background:#c4c4c4"></div>
<div class="abs" style="left:2.5px;top:434.2px;width:14.500px;height:12px;font-size:7.500px;line-height:12px;color:#666;text-align:center;transform:rotate(-90deg)">15</div>
<div class="abs" style="left:8.5px;top:423.2px;width:2px;height:1px;background:#c4c4c4"></div>
<div class="abs" style="left:260.5px;top:25.6px;width:605px;height:1.2px;background:#3c3c3c"></div>
<div class="abs" style="left:260.5px;top:42.6px;width:605px;height:1.2px;background:#3c3c3c"></div>
<div class="abs" style="left:260.5px;top:59.6px;width:605px;height:1.2px;background:#3c3c3c"></div>
<div class="abs" style="left:260.5px;top:77.6px;width:605px;height:1.2px;background:#3c3c3c"></div>
<div class="abs" style="left:260.5px;top:127.6px;width:605px;height:1.2px;background:#3c3c3c"></div>
<div class="abs" style="left:260.4px;top:-8.3px;width:1.2px;height:137px;background:#3c3c3c"></div>
<div class="abs" style="left:425.4px;top:-8.3px;width:1.2px;height:137px;background:#3c3c3c"></div>
<div class="abs" style="left:863.4px;top:-8.3px;width:1.2px;height:137px;background:#3c3c3c"></div>
<div class="abs " style="left:269.7px;top:-8.2px;font-size:14.6px;line-height:16.79px;color:#1a1a1a;white-space:nowrap;font-weight:bold;">1.</div>
<div class="abs " style="left:290.7px;top:-8.2px;font-size:14.6px;line-height:16.79px;color:#1a1a1a;white-space:nowrap;font-weight:bold;">Unidad de</div>
<div class="abs " style="left:290.7px;top:8.5px;font-size:14.6px;line-height:16.79px;color:#1a1a1a;white-space:nowrap;font-weight:bold;">aprendizaje</div>
<div class="abs t1h" style="left:435.8px;top:0.8px;font-size:14.6px;line-height:16.79px;color:#1a1a1a;white-space:nowrap;font-weight:bold;">III.Evaluación de usabilidad y experiencia del usuario</div>
<div class="abs " style="left:269.7px;top:26.3px;font-size:14.6px;line-height:16.79px;color:#1a1a1a;white-space:nowrap;font-weight:bold;">2.</div>
<div class="abs " style="left:290.7px;top:26.3px;font-size:14.6px;line-height:16.79px;color:#1a1a1a;white-space:nowrap;font-weight:bold;">Horas Teóricas</div>
<div class="abs " style="left:433.5px;top:26.3px;font-size:14.6px;line-height:16.79px;color:#1a1a1a;white-space:nowrap;">5</div>
<div class="abs " style="left:269.7px;top:43.7px;font-size:14.6px;line-height:16.79px;color:#1a1a1a;white-space:nowrap;font-weight:bold;">3.</div>
<div class="abs " style="left:290.7px;top:43.7px;font-size:14.6px;line-height:16.79px;color:#1a1a1a;white-space:nowrap;font-weight:bold;">Horas Prácticas</div>
<div class="abs " style="left:433.5px;top:43.7px;font-size:14.6px;line-height:16.79px;color:#1a1a1a;white-space:nowrap;">10</div>
<div class="abs " style="left:269.7px;top:60.91px;font-size:14.6px;line-height:16.79px;color:#1a1a1a;white-space:nowrap;font-weight:bold;">4.</div>
<div class="abs " style="left:290.7px;top:60.91px;font-size:14.6px;line-height:16.79px;color:#1a1a1a;white-space:nowrap;font-weight:bold;">Horas Totales</div>
<div class="abs " style="left:433.5px;top:60.91px;font-size:14.6px;line-height:16.79px;color:#1a1a1a;white-space:nowrap;">15</div>
<div class="abs " style="left:269.7px;top:78.8px;font-size:14.6px;line-height:16.79px;color:#1a1a1a;white-space:nowrap;font-weight:bold;">5.</div>
<div class="abs " style="left:290.7px;top:78.8px;font-size:14.6px;line-height:16.79px;color:#1a1a1a;white-space:nowrap;font-weight:bold;">Objetivo de la</div>
<div class="abs " style="left:290.7px;top:95.5px;font-size:14.6px;line-height:16.79px;color:#1a1a1a;white-space:nowrap;font-weight:bold;">Unidad de</div>
<div class="abs " style="left:290.7px;top:112.2px;font-size:14.6px;line-height:16.79px;color:#1a1a1a;white-space:nowrap;font-weight:bold;">Aprendizaje</div>
<div class="abs t1p" style="left:433.5px;top:78.8px;font-size:14.6px;line-height:16.79px;color:#1a1a1a;white-space:nowrap;">El alumno implementará evaluaciones formativas, <span class="sq">sumativas</span> y de</div>
<div class="abs t1p" style="left:433.5px;top:95.5px;font-size:14.6px;line-height:16.79px;color:#1a1a1a;white-space:nowrap;">accesibilidad para contribuir al proceso de mejora continua de los</div>
<div class="abs t1p" style="left:433.5px;top:112.2px;font-size:14.6px;line-height:16.79px;color:#1a1a1a;white-space:nowrap;">prototipos y del producto final.</div>
<div class="abs" style="left:261.0px;top:162.7px;width:603.5px;height:43.8px;background:#d9d9d9"></div>
<div class="abs" style="left:260.5px;top:161.6px;width:605px;height:1.2px;background:#3c3c3c"></div>
<div class="abs" style="left:260.5px;top:205.6px;width:605px;height:1.2px;background:#3c3c3c"></div>
<div class="abs" style="left:260.5px;top:374.6px;width:605px;height:1.2px;background:#3c3c3c"></div>
<div class="abs" style="left:260.4px;top:162.7px;width:1.2px;height:289px;background:#3c3c3c"></div>
<div class="abs" style="left:376.4px;top:162.7px;width:1.2px;height:289px;background:#3c3c3c"></div>
<div class="abs" style="left:552.4px;top:162.7px;width:1.2px;height:289px;background:#3c3c3c"></div>
<div class="abs" style="left:738.4px;top:162.7px;width:1.2px;height:289px;background:#3c3c3c"></div>
<div class="abs" style="left:864.4px;top:162.7px;width:1.2px;height:289px;background:#3c3c3c"></div>
<div class="abs" style="left:260.3px;top:174.7px;width:120px;text-align:center;font-size:14.600px;line-height:18px;font-weight:bold;color:#111;white-space:nowrap">Temas</div>
<div class="abs" style="left:405.0px;top:174.7px;width:120px;text-align:center;font-size:14.600px;line-height:18px;font-weight:bold;color:#111;white-space:nowrap">Saber</div>
<div class="abs" style="left:585.5px;top:174.7px;width:120px;text-align:center;font-size:14.600px;line-height:18px;font-weight:bold;color:#111;white-space:nowrap">Saber hacer</div>
<div class="abs" style="left:741.5px;top:174.7px;width:120px;text-align:center;font-size:14.600px;line-height:18px;font-weight:bold;color:#111;white-space:nowrap">Ser</div>
<div class="abs t2" style="left:266.5px;top:207.14px;font-size:13.3px;line-height:15.33px;color:#222;white-space:nowrap;">Evaluación</div>
<div class="abs t2" style="left:266.5px;top:222.47px;font-size:13.3px;line-height:15.33px;color:#222;white-space:nowrap;">formativa.</div>
<div class="abs t2" style="left:381.5px;top:207.14px;font-size:13.3px;line-height:15.33px;color:#222;white-space:nowrap;">Identificar las técnicas de</div>
<div class="abs t2" style="left:381.5px;top:222.47px;font-size:13.3px;line-height:15.33px;color:#222;white-space:nowrap;">evaluación formativa de</div>
<div class="abs t2" style="left:381.5px;top:237.79px;font-size:13.3px;line-height:15.33px;color:#222;white-space:nowrap;">interfaces: análisis</div>
<div class="abs t2" style="left:381.5px;top:253.13px;font-size:13.3px;line-height:15.33px;color:#222;white-space:nowrap;">comparativo A/B,</div>
<div class="abs t2" style="left:381.5px;top:268.46px;font-size:13.3px;line-height:15.33px;color:#222;white-space:nowrap;">evaluación heurística, <span class="sq">think</span></div>
<div class="abs t2" style="left:381.5px;top:283.78px;font-size:13.3px;line-height:15.33px;color:#222;white-space:nowrap;"><span class="sq">aloud</span>, <span class="sq">cognitive</span></div>
<div class="abs t2" style="left:381.5px;top:299.12px;font-size:13.3px;line-height:15.33px;color:#222;white-space:nowrap;"><span class="sq">walkthrough</span>, cuestionarios,</div>
<div class="abs t2" style="left:381.5px;top:314.45px;font-size:13.3px;line-height:15.33px;color:#222;white-space:nowrap;"><span class="sq">clickstreams</span>, <span class="sq">eye</span>-tracking.</div>
<div class="abs t2" style="left:381.5px;top:345.11px;font-size:13.3px;line-height:15.33px;color:#222;white-space:nowrap;">Identificar las herramientas</div>
<div class="abs t2" style="left:381.5px;top:360.44px;font-size:13.3px;line-height:15.33px;color:#222;white-space:nowrap;">de evaluación formativa.</div>
<div class="abs t2" style="left:557.3px;top:207.14px;font-size:13.3px;line-height:15.33px;color:#222;white-space:nowrap;">Determinar la herramienta</div>
<div class="abs t2" style="left:557.3px;top:222.47px;font-size:13.3px;line-height:15.33px;color:#222;white-space:nowrap;">para evaluación formativa.</div>
<div class="abs t2" style="left:557.3px;top:253.13px;font-size:13.3px;line-height:15.33px;color:#222;white-space:nowrap;">Evaluar los prototipos de las</div>
<div class="abs t2" style="left:557.3px;top:268.46px;font-size:13.3px;line-height:15.33px;color:#222;white-space:nowrap;">interfaces de usuario.</div>
<div class="abs t2" style="left:743.1px;top:207.14px;font-size:13.3px;line-height:15.33px;color:#222;white-space:nowrap;">Analítico.</div>
<div class="abs t2" style="left:743.1px;top:222.47px;font-size:13.3px;line-height:15.33px;color:#222;white-space:nowrap;">Sistemático.</div>
<div class="abs t2" style="left:743.1px;top:237.79px;font-size:13.3px;line-height:15.33px;color:#222;white-space:nowrap;">Proactivo.</div>
<div class="abs t2" style="left:743.1px;top:253.13px;font-size:13.3px;line-height:15.33px;color:#222;white-space:nowrap;">Trabajo en equipo.</div>
<div class="abs t2" style="left:743.1px;top:268.46px;font-size:13.3px;line-height:15.33px;color:#222;white-space:nowrap;">Sentido de</div>
<div class="abs t2" style="left:743.1px;top:283.78px;font-size:13.3px;line-height:15.33px;color:#222;white-space:nowrap;">planeación.</div>
<div class="abs t2" style="left:743.1px;top:299.12px;font-size:13.3px;line-height:15.33px;color:#222;white-space:nowrap;">Trabajo bajo</div>
<div class="abs t2" style="left:743.1px;top:314.45px;font-size:13.3px;line-height:15.33px;color:#222;white-space:nowrap;">presión.</div>
<div class="abs t2" style="left:743.1px;top:329.77px;font-size:13.3px;line-height:15.33px;color:#222;white-space:nowrap;">Liderazgo.</div>
<div class="abs t2" style="left:743.1px;top:345.11px;font-size:13.3px;line-height:15.33px;color:#222;white-space:nowrap;">Empatía.</div>
<div class="abs t2" style="left:266.5px;top:375.63px;font-size:13.3px;line-height:15.33px;color:#222;white-space:nowrap;">Evaluación</div>
<div class="abs t2" style="left:266.5px;top:390.97px;font-size:13.3px;line-height:15.33px;color:#222;white-space:nowrap;"><span class="sq">sumativa</span>.</div>
<div class="abs t2" style="left:381.5px;top:375.63px;font-size:13.3px;line-height:15.33px;color:#222;white-space:nowrap;">Identificar las técnicas de</div>
<div class="abs t2" style="left:381.5px;top:390.97px;font-size:13.3px;line-height:15.33px;color:#222;white-space:nowrap;">evaluación <span class="sq">sumativa</span> de</div>
<div class="abs t2" style="left:381.5px;top:406.29px;font-size:13.3px;line-height:15.33px;color:#222;white-space:nowrap;">interfaces.</div>
<div class="abs t2" style="left:381.5px;top:436.96px;font-size:13.3px;line-height:15.33px;color:#222;white-space:nowrap;">Identificar los elementos</div>
<div class="abs t2" style="left:557.3px;top:375.63px;font-size:13.3px;line-height:15.33px;color:#222;white-space:nowrap;">Evaluar el producto</div>
<div class="abs t2" style="left:557.3px;top:390.97px;font-size:13.3px;line-height:15.33px;color:#222;white-space:nowrap;">desarrollado.</div>
<div class="abs t2" style="left:743.1px;top:375.63px;font-size:13.3px;line-height:15.33px;color:#222;white-space:nowrap;">Analítico.</div>
<div class="abs t2" style="left:743.1px;top:390.97px;font-size:13.3px;line-height:15.33px;color:#222;white-space:nowrap;">Sistemático.</div>
<div class="abs t2" style="left:743.1px;top:406.29px;font-size:13.3px;line-height:15.33px;color:#222;white-space:nowrap;">Proactivo.</div>
<div class="abs t2" style="left:743.1px;top:421.62px;font-size:13.3px;line-height:15.33px;color:#222;white-space:nowrap;">Trabajo en equipo.</div>
<div class="abs t2" style="left:743.1px;top:436.96px;font-size:13.3px;line-height:15.33px;color:#222;white-space:nowrap;">Sentido de</div>
<svg class="abs" style="left:265.5px;top:430.7px" width="12" height="18" viewBox="0 0 12 18"><path d="M1.500 1.500 V14 L4.500 11.200 L6.800 16.200 L8.600 15.400 L6.400 10.600 L10.500 10.400Z" fill="#fff" stroke="#222" stroke-width="1"/></svg>
</div>
<div class="abs" style="left:23px;top:751.3px;width:1122px;height:17.7px;background:#2b579a"></div>
<div class="abs " style="left:30.2px;top:753.95px;font-size:9.3px;line-height:12.1px;color:#fff;white-space:nowrap;transform:scaleX(0.91);transform-origin:left center;">PÁGINA 10 DE 15</div>
<div class="abs " style="left:116px;top:753.95px;font-size:9.3px;line-height:12.1px;color:#fff;white-space:nowrap;transform:scaleX(0.89);transform-origin:left center;">12 DE 1840 PALABRAS</div>
<svg class="abs" style="left:219px;top:754px" width="14" height="12" viewBox="0 0 14 12"><path d="M1 2 H5.500 V10 H1Z M5.500 2 L8 1 V9 L5.500 10" fill="none" stroke="#dfe7f3" stroke-width="1"/><path d="M9.500 4 L13 8 M13 4 L9.500 8" stroke="#dfe7f3" stroke-width="1"/></svg>
<div class="abs" style="left:935px;top:751px;width:30px;height:18px;background:#1f4687"></div>
<svg class="abs" style="left:910px;top:754px" width="80" height="12" viewBox="0 0 80 12"><g fill="none" stroke="#dfe7f3" stroke-width="1"><path d="M2 1.500 H7.500 V10 H2Z M7.500 1.500 H13 V10 H7.500"/><rect x="33.500" y="1.500" width="11" height="9"/><path d="M35 4 h8 M35 6 h8 M35 8 h8"/><rect x="65.500" y="1.500" width="8" height="8"/><path d="M67 4 h4 M67 6 h4"/><circle cx="74.500" cy="8.500" r="2.500" fill="#2b579a"/></g></svg>
<div class="abs " style="left:999.5px;top:752.35px;font-size:11px;line-height:14.3px;color:#fff;white-space:nowrap;font-weight:bold;">-</div>
<div class="abs" style="left:1010px;top:759.5px;width:80px;height:1px;background:#c8d4e8"></div>
<div class="abs" style="left:1050px;top:754.5px;width:2.5px;height:11px;background:#fff"></div>
<div class="abs " style="left:1093.5px;top:752.85px;font-size:11px;line-height:14.3px;color:#fff;white-space:nowrap;font-weight:bold;">+</div>
<div class="abs " style="left:1114px;top:753.95px;font-size:9.3px;line-height:12.1px;color:#fff;white-space:nowrap;transform:scaleX(0.88);transform-origin:left center;">110 %</div>
</div>
<!-- /WORD -->
<div class="abs tile" style="left:1170px;top:166px;width:201px;height:144px"></div>
<div class="abs micoff" style="left:1331.2px;top:178.5px"><svg width="27" height="27" viewBox="0 0 27 27"><g transform="translate(4.400,3.700) scale(0.775)"><path fill="#fff" d="M19 11h-1.700c0 .74-.16 1.430-.43 2.050l1.230 1.230c.56-.98.900-2.090.900-3.280zm-4.020.17c0-.06.020-.11.020-.17V5c0-1.660-1.340-3-3-3S9 3.340 9 5v.18l5.980 5.990zM4.270 3L3 4.270l6.010 6.010V11c0 1.660 1.330 3 2.990 3 .22 0 .44-.03.650-.08l1.660 1.660c-.71.330-1.500.52-2.310.52-2.760 0-5.300-2.100-5.300-5.100H5c0 3.410 2.720 6.230 6 6.720V21h2v-3.280c.91-.13 1.770-.45 2.540-.9L19.730 21 21 19.730 4.270 3z"/></g></svg></div>
<div class="abs tname" style="left:1186.5px;top:278px;line-height:18px">Omar Salgado De Leon</div>
<div class="abs tile" style="left:1383px;top:166px;width:200.5px;height:144px"></div>
<div class="abs micoff" style="left:1544.2px;top:178.5px"><svg width="27" height="27" viewBox="0 0 27 27"><g transform="translate(4.400,3.700) scale(0.775)"><path fill="#fff" d="M19 11h-1.700c0 .74-.16 1.430-.43 2.050l1.230 1.230c.56-.98.900-2.090.900-3.280zm-4.020.17c0-.06.020-.11.020-.17V5c0-1.660-1.340-3-3-3S9 3.340 9 5v.18l5.980 5.990zM4.270 3L3 4.270l6.010 6.010V11c0 1.660 1.330 3 2.990 3 .22 0 .44-.03.650-.08l1.660 1.660c-.71.330-1.500.52-2.310.52-2.760 0-5.300-2.100-5.300-5.100H5c0 3.410 2.720 6.230 6 6.720V21h2v-3.280c.91-.13 1.770-.45 2.540-.9L19.730 21 21 19.730 4.270 3z"/></g></svg></div>
<div class="abs tname" style="left:1399.5px;top:278px;line-height:18px">Leslie Serrano Manjarr...</div>
<div class="abs tile" style="left:1170px;top:322px;width:201px;height:143px"></div>
<div class="abs micoff" style="left:1331.2px;top:334.2px"><svg width="27" height="27" viewBox="0 0 27 27"><g transform="translate(4.400,3.700) scale(0.775)"><path fill="#fff" d="M19 11h-1.700c0 .74-.16 1.430-.43 2.050l1.230 1.230c.56-.98.900-2.090.900-3.280zm-4.020.17c0-.06.020-.11.020-.17V5c0-1.660-1.340-3-3-3S9 3.340 9 5v.18l5.980 5.990zM4.270 3L3 4.270l6.010 6.010V11c0 1.660 1.330 3 2.990 3 .22 0 .44-.03.650-.08l1.660 1.660c-.71.330-1.500.52-2.310.52-2.760 0-5.300-2.100-5.300-5.100H5c0 3.410 2.720 6.230 6 6.720V21h2v-3.280c.91-.13 1.770-.45 2.540-.9L19.730 21 21 19.730 4.270 3z"/></g></svg></div>
<div class="abs tname" style="left:1186.5px;top:433.7px;line-height:18px">Isrrael Delgado</div>
<div class="abs tile" style="left:1383px;top:322px;width:200.5px;height:143px"></div>
<div class="abs micoff" style="left:1544.2px;top:334.2px"><svg width="27" height="27" viewBox="0 0 27 27"><g transform="translate(4.400,3.700) scale(0.775)"><path fill="#fff" d="M19 11h-1.700c0 .74-.16 1.430-.43 2.050l1.230 1.230c.56-.98.900-2.090.900-3.280zm-4.020.17c0-.06.020-.11.020-.17V5c0-1.660-1.340-3-3-3S9 3.340 9 5v.18l5.980 5.990zM4.270 3L3 4.270l6.010 6.010V11c0 1.660 1.330 3 2.990 3 .22 0 .44-.03.650-.08l1.660 1.660c-.71.330-1.500.52-2.310.52-2.760 0-5.300-2.100-5.300-5.100H5c0 3.410 2.720 6.230 6 6.720V21h2v-3.280c.91-.13 1.770-.45 2.540-.9L19.730 21 21 19.730 4.270 3z"/></g></svg></div>
<div class="abs tname" style="left:1399.5px;top:433.7px;line-height:18px">Vanessa Reyna</div>
<div class="abs tile" style="left:1170px;top:477px;width:201px;height:144px"></div>
<div class="abs micoff" style="left:1331.2px;top:489.8px"><svg width="27" height="27" viewBox="0 0 27 27"><g transform="translate(4.400,3.700) scale(0.775)"><path fill="#fff" d="M19 11h-1.700c0 .74-.16 1.430-.43 2.050l1.230 1.230c.56-.98.900-2.090.900-3.280zm-4.020.17c0-.06.020-.11.020-.17V5c0-1.660-1.340-3-3-3S9 3.340 9 5v.18l5.980 5.990zM4.270 3L3 4.270l6.010 6.010V11c0 1.660 1.330 3 2.990 3 .22 0 .44-.03.650-.08l1.660 1.660c-.71.330-1.500.52-2.310.52-2.760 0-5.300-2.100-5.300-5.100H5c0 3.410 2.720 6.230 6 6.720V21h2v-3.280c.91-.13 1.770-.45 2.540-.9L19.730 21 21 19.730 4.270 3z"/></g></svg></div>
<div class="abs tname" style="left:1186.5px;top:589.3px;line-height:18px">Aislinn Ramírez</div>
<div class="abs tile" style="left:1383px;top:477px;width:200.5px;height:144px"></div>
<div class="abs micoff" style="left:1544.2px;top:489.8px"><svg width="27" height="27" viewBox="0 0 27 27"><g transform="translate(4.400,3.700) scale(0.775)"><path fill="#fff" d="M19 11h-1.700c0 .74-.16 1.430-.43 2.050l1.230 1.230c.56-.98.900-2.090.900-3.280zm-4.020.17c0-.06.020-.11.020-.17V5c0-1.660-1.340-3-3-3S9 3.340 9 5v.18l5.980 5.990zM4.270 3L3 4.270l6.010 6.010V11c0 1.660 1.330 3 2.990 3 .22 0 .44-.03.650-.08l1.660 1.660c-.71.330-1.500.52-2.310.52-2.760 0-5.300-2.100-5.300-5.100H5c0 3.410 2.720 6.230 6 6.720V21h2v-3.280c.91-.13 1.770-.45 2.540-.9L19.730 21 21 19.730 4.270 3z"/></g></svg></div>
<div class="abs tname" style="left:1399.5px;top:589.3px;line-height:18px">Ximena Betancourt G...</div>
<div class="abs tile" style="left:1170px;top:633px;width:201px;height:143px"></div>
<div class="abs tile" style="left:1383px;top:633px;width:200.5px;height:143px"></div>
<div class="abs micoff" style="left:1544.2px;top:645.5px"><svg width="27" height="27" viewBox="0 0 27 27"><g transform="translate(4.400,3.700) scale(0.775)"><path fill="#fff" d="M19 11h-1.700c0 .74-.16 1.430-.43 2.050l1.230 1.230c.56-.98.900-2.090.900-3.280zm-4.020.17c0-.06.020-.11.020-.17V5c0-1.660-1.340-3-3-3S9 3.340 9 5v.18l5.980 5.990zM4.270 3L3 4.270l6.010 6.010V11c0 1.660 1.330 3 2.990 3 .22 0 .44-.03.650-.08l1.660 1.660c-.71.330-1.500.52-2.310.52-2.760 0-5.300-2.100-5.300-5.100H5c0 3.410 2.720 6.230 6 6.720V21h2v-3.280c.91-.13 1.770-.45 2.540-.9L19.730 21 21 19.730 4.270 3z"/></g></svg></div>
<div class="abs tname" style="left:1399.5px;top:745px;line-height:18px">usiel garcia</div>
<div class="abs av" style="left:1452.5px;top:206.5px;width:61px;height:61px;background:#8d6e63;font-size:31px;line-height:61px">L</div>
<div class="abs av" style="left:1239.5px;top:362.3px;width:61px;height:61px;background:#7b1fa2;font-size:31px;line-height:61px">I</div>
<div class="abs av" style="left:1452.5px;top:362.3px;width:61px;height:61px;background:#7e57c2;font-size:31px;line-height:61px">V</div>
<div class="abs av" style="left:1239.5px;top:518.4px;width:61px;height:61px;background:#00897b;font-size:31px;line-height:61px">A</div>
<svg class="abs" id="av-omar" style="left:1240px;top:207px" width="61" height="61" viewBox="0 0 61 61"><defs><clipPath id="cpo"><circle cx="30.500" cy="30.500" r="30.500"/></clipPath><radialGradient id="sko" cx="50%" cy="48%" r="58%"><stop offset="0" stop-color="#d5a080"/><stop offset=".55" stop-color="#c08766"/><stop offset="1" stop-color="#8a563d"/></radialGradient><filter id="blo" x="-10%" y="-10%" width="120%" height="120%"><feGaussianBlur stdDeviation=".7"/></filter></defs><g clip-path="url(#cpo)"><g filter="url(#blo)"><rect x="-3" y="-3" width="67" height="67" fill="#e8e8e5"/><rect x="-3" y="33.500" width="67" height="32" fill="#2a2c2b"/><rect x="-2" y="32.600" width="15" height="1.800" fill="#cdb574"/><path d="M17 64 L21 46 H43 L47 64Z" fill="#a3a6cb"/><path d="M22 64 L24 50 M27 64 L27.500 52 M39 64 L37 50 M43 64 L40 50" stroke="#6f7299" stroke-width="1"/><ellipse cx="31" cy="17.500" rx="21.500" ry="17.500" fill="#2b2623"/><path d="M12.800 23 Q12.500 8.500 24 7 Q31 5.800 38 7 Q49.500 8.500 49.500 23 L49 39 Q47 52 39 58.500 Q31 63 24 58.500 Q15 52 13.200 39Z" fill="url(#sko)"/><path d="M15.500 23.800 Q20.500 21.300 26.500 23.500 M35.500 23.500 Q41.500 21.300 46.500 23.800" fill="none" stroke="#3b2920" stroke-width="1.700"/><ellipse cx="21" cy="27.300" rx="3.200" ry="1.200" fill="#4a2f25"/><ellipse cx="41" cy="27.300" rx="3.200" ry="1.200" fill="#4a2f25"/><path d="M28 39.500 Q31 41.500 34.500 39.500" fill="none" stroke="#9a6048" stroke-width="1.200"/><path d="M23.500 46.800 Q31 44.800 39 46.800 Q31 50.300 23.500 46.800Z" fill="#bb6f66"/></g></g></svg>
<svg class="abs" id="av-xim" style="left:1453px;top:518.500px" width="61" height="61" viewBox="0 0 61 61"><defs><clipPath id="cpx"><circle cx="30.500" cy="30.500" r="30.300"/></clipPath><filter id="blx" x="-10%" y="-10%" width="120%" height="120%"><feGaussianBlur stdDeviation=".7"/></filter></defs><g clip-path="url(#cpx)"><rect width="61" height="61" fill="#030303"/><g filter="url(#blx)"><rect x="8.600" y="-2" width="42.800" height="66" fill="#a89b97"/><rect x="8.600" y="25" width="7" height="18" fill="#8c8480"/><path d="M17 22 Q17 3 33 2.500 Q51.500 3 51.500 22 V43 Q45 44 42 38 L41 24 Q33 17 19.500 24 L20.500 38 Q18 44 12 43 Q17 34 17 22Z" fill="#3b2826"/><path d="M12 43 Q17 36 18.500 28 L21 38 Q20 44 15 45Z" fill="#6d4638"/><path d="M19.500 21 Q30 16 41.500 21 L41.500 30 Q40 37 34 39.500 Q30 41 26 39 Q21 36 20 30Z" fill="#c9a79e"/><path d="M20.500 23.500 Q24 22 27.500 23.500 M33.500 22.800 Q37 21.300 40.500 23" stroke="#4a2d28" stroke-width="1.300" fill="none"/><ellipse cx="29.700" cy="33.800" rx="3.700" ry="1.900" fill="#a6353f"/><path d="M8.600 45 Q20 40 26 39.500 H36 Q44 41 51.400 44 V56 H8.600Z" fill="#c5a39c"/><path d="M8.600 49.500 Q30 55.500 51.400 54 V64 H8.600Z" fill="#17171b"/><path d="M26 41 L29 58 L39 41" stroke="#7a5a48" stroke-width=".7" fill="none"/></g></g></svg>
<svg class="abs" id="av-usiel" style="left:1453px;top:674.500px" width="61" height="61" viewBox="0 0 61 61"><defs><clipPath id="cpu"><circle cx="30.500" cy="30.500" r="30.300"/></clipPath><filter id="blu" x="-10%" y="-10%" width="120%" height="120%"><feGaussianBlur stdDeviation=".6"/></filter></defs><g clip-path="url(#cpu)"><rect width="61" height="61" fill="#a8a4a5"/><g filter="url(#blu)"><path d="M3.500 14 L5 14 L10.500 54 L9 54Z" fill="#b9b49c"/><path d="M10.500 61 V48 Q12 43.500 20 43.500 H38 Q46 44 47 50 V61Z" fill="#2e4a52"/><path d="M15 45 L19 61 H23 L19 44Z" fill="#3b3a3c"/><path d="M17.200 30 Q16 19 26 18.500 Q34.500 19 34.300 30Z" fill="#4a3a38"/><path d="M18.500 27 Q26 23.500 34 27 L34 33 Q33 38.500 26.500 39.500 Q20 38.500 18.800 33Z" fill="#b59288"/><ellipse cx="18" cy="32" rx="1.300" ry="2.200" fill="#b59288"/><ellipse cx="34.800" cy="32" rx="1.300" ry="2.200" fill="#b59288"/><path d="M24 36.800 h4.500" stroke="#a06a66" stroke-width="1.100"/><rect x="21" y="38.700" width="12.800" height="20.500" rx="2.200" fill="#29262a"/><circle cx="27.400" cy="47" r="1.300" fill="#2f5a5e"/><path d="M16 55 Q18 51 21 52 V60 H17Z M33.800 51 Q38 50 39 54 L38 61 H30 V57 H33.800Z" fill="#c7a094"/></g></g></svg>
<div class="abs av" style="left:1234px;top:668.500px;width:39.500px;height:39.500px;background:#455a64;font-size:21px;line-height:39.500px">M</div>
<div class="abs" style="left:1268.500px;top:666.500px;width:43px;height:43px;border-radius:50%;background:#3c4043"></div>
<svg class="abs" id="av-nine" style="left:1270px;top:668px" width="40" height="40" viewBox="0 0 40 40"><defs><clipPath id="cpn"><circle cx="20" cy="20" r="20"/></clipPath><filter id="bln" x="-10%" y="-10%" width="120%" height="120%"><feGaussianBlur stdDeviation=".55"/></filter></defs><g clip-path="url(#cpn)"><rect width="40" height="40" fill="#040404"/><g filter="url(#bln)"><rect x="6" y="-2" width="26" height="44" fill="#e9e3e8"/><path d="M6 -2 H32 V14 Q30 10 24 4 Q14 6 10 14 Q8 20 8 26 L6 28Z" fill="#6c4b41"/><path d="M24 -2 H32 V8 Q28 4 24 -2Z" fill="#8fb0a0"/><path d="M9.500 14 Q13 5 22 5 Q27 9 26.500 16 Q25 23 19 24 Q12 23 9.500 14Z" fill="#e2b8a8" transform="rotate(-18 18 14)"/><path d="M14 20.500 q2.200 1.300 4.200 -.3" stroke="#c4646a" stroke-width="1.300" fill="none"/><path d="M6 27 Q12 22 19 25 Q26 24 32 21 V42 H6Z" fill="#ece6ec"/><rect x="6" y="31" width="9" height="7" fill="#bcd2ee"/><rect x="24" y="35" width="8" height="6" fill="#bcd2ee"/><path d="M9.500 31.500 h3 M11 31.500 v4.500 M15 31.500 v3.500 q1.500 2 3 0 v-3.500 M20 36 l1.800 -4.500 l1.800 4.500 M26 31.500 h3 M26 33.700 h2.500 M26 36 h3 M29 31.500 v4.500" stroke="#d1506a" stroke-width="1.200" fill="none"/></g></g></svg>
<div class="abs tname" style="left:1170px;top:723px;width:200px;text-align:center;line-height:18px">9 más</div>
<!-- BOTTOM -->
<div class="abs" id="actwin" style="left:1260px;top:770px;font-family:'Liberation Sans',sans-serif;color:#77797c;white-space:nowrap;font-size:20.500px;line-height:26px;letter-spacing:0.12px">Activar Windows</div>
<div class="abs" id="actwin2" style="left:1260px;top:798px;color:#77797c;white-space:nowrap;font-size:14.700px;line-height:20px">Ve a Configuración para activar Windows.</div>
<div class="abs" id="clock" style="left:25px;top:806px;color:#fff;font-size:16.500px;font-weight:bold;line-height:22px;white-space:nowrap;letter-spacing:-0.2px">8:10</div>
<div class="abs" style="left:69.500px;top:809px;width:1px;height:17px;background:#9aa0a6"></div>
<div class="abs" id="mcode" style="left:83px;top:806px;color:#fff;font-size:17px;font-weight:bold;line-height:22px;white-space:nowrap;letter-spacing:0.42px">dbe-fdmm-wvk</div>
<!-- mic group -->
<div class="abs" style="left:507px;top:792.500px;width:91.500px;height:50px;border-radius:13px;background:#601410"></div>
<div class="abs" style="left:548px;top:792.500px;width:50.500px;height:50px;border-radius:13px;background:#f9dedc"></div>
<svg class="abs" style="left:524px;top:811px" width="14" height="12" viewBox="0 0 14 12"><path d="M2.500 8.500 L7 4 L11.500 8.500" fill="none" stroke="#f9dedc" stroke-width="1.900"/></svg>
<svg class="abs" style="left:561.500px;top:805px" width="24" height="24" viewBox="0 0 24 24"><path fill="#601410" d="M19 11h-1.700c0 .74-.16 1.430-.43 2.050l1.230 1.230c.56-.98.900-2.090.900-3.280zm-4.020.17c0-.06.020-.11.020-.17V5c0-1.660-1.340-3-3-3S9 3.340 9 5v.18l5.980 5.990zM4.270 3L3 4.270l6.010 6.010V11c0 1.660 1.330 3 2.990 3 .22 0 .44-.03.650-.08l1.660 1.660c-.71.330-1.500.52-2.310.52-2.760 0-5.300-2.100-5.300-5.100H5c0 3.410 2.720 6.230 6 6.720V21h2v-3.280c.91-.13 1.770-.45 2.540-.9L19.730 21 21 19.730 4.270 3z"/></svg>
<!-- cam group -->
<div class="abs" style="left:607px;top:792.500px;width:91.500px;height:50px;border-radius:13px;background:#601410"></div>
<div class="abs" style="left:648px;top:792.500px;width:50.500px;height:50px;border-radius:13px;background:#f9dedc"></div>
<svg class="abs" style="left:624px;top:811px" width="14" height="12" viewBox="0 0 14 12"><path d="M2.500 8.500 L7 4 L11.500 8.500" fill="none" stroke="#f9dedc" stroke-width="1.900"/></svg>
<svg class="abs" style="left:661px;top:805.500px" width="24" height="24" viewBox="0 0 24 24"><path fill="#601410" d="M9.560 8l-2-2-4.150-4.140L2 3.270 4.730 6H4c-.55 0-1 .45-1 1v10c0 .55.450 1 1 1h12c.21 0 .39-.08.550-.18L19.730 21l1.410-1.410-8.860-8.860L9.560 8zM5 16V8h1.730l8 8H5zm10-8v2.610l6 6V6.500l-4 4V7c0-.55-.45-1-1-1h-5.610l2 2H15z"/></svg>
<!-- round buttons -->
<div class="abs" style="left:706.500px;top:792.500px;width:58px;height:50px;border-radius:25px;background:#333537"></div>
<svg class="abs" style="left:723.500px;top:805.500px" width="24" height="24" viewBox="0 0 24 24"><path fill="#e3e3e3" d="M19 4H5c-1.110 0-2 .9-2 2v12c0 1.100.89 2 2 2h14c1.100 0 2-.9 2-2V6c0-1.100-.9-2-2-2zm0 14H5V6h14v12zM7 15h3c.55 0 1-.45 1-1v-1H9.500v.5h-2v-3h2v.5H11v-1c0-.55-.45-1-1-1H7c-.55 0-1 .45-1 1v4c0 .55.450 1 1 1zm7 0h3c.55 0 1-.45 1-1v-1h-1.500v.5h-2v-3h2v.5H18v-1c0-.55-.45-1-1-1h-3c-.55 0-1 .45-1 1v4c0 .55.450 1 1 1z"/></svg>
<div class="abs" style="left:773px;top:792.500px;width:58.500px;height:50px;border-radius:25px;background:#333537"></div>
<svg class="abs" style="left:790.500px;top:805px" width="24" height="24" viewBox="0 0 24 24"><path fill="#e3e3e3" d="M11.990 2C6.470 2 2 6.480 2 12s4.470 10 9.990 10C17.520 22 22 17.520 22 12S17.520 2 11.990 2zM12 20c-4.420 0-8-3.580-8-8s3.580-8 8-8 8 3.580 8 8-3.580 8-8 8zm3.500-9c.83 0 1.500-.67 1.500-1.500S16.330 8 15.500 8 14 8.670 14 9.500s.67 1.500 1.500 1.500zm-7 0c.83 0 1.500-.67 1.500-1.500S9.330 8 8.500 8 7 8.670 7 9.500 7.670 11 8.500 11zm3.500 6.500c2.330 0 4.310-1.460 5.110-3.500H6.890c.8 2.040 2.780 3.500 5.110 3.500z"/></svg>
<div class="abs" style="left:840px;top:792.500px;width:58.500px;height:50px;border-radius:25px;background:#333537"></div>
<svg class="abs" style="left:856.400px;top:804.500px" width="26" height="26" viewBox="0 0 24 24"><path fill="#e3e3e3" d="M21 3H3c-1.110 0-2 .89-2 2v14c0 1.110.89 2 2 2h18c1.110 0 2-.89 2-2V5c0-1.110-.89-2-2-2zm0 16.020H3V4.980h18v14.040zM10 12H8l4-4 4 4h-2v4h-4v-4z"/></svg>
<div class="abs" style="left:907px;top:792.500px;width:58.500px;height:50px;border-radius:25px;background:#333537"></div>
<svg class="abs" style="left:923.500px;top:805px" width="25" height="25" viewBox="0 0 24 24"><path fill="#e3e3e3" d="M21 7c0-1.380-1.120-2.500-2.500-2.500-.17 0-.34.020-.5.050V4c0-1.380-1.120-2.500-2.500-2.500-.23 0-.46.030-.67.090C14.460.66 13.560 0 12.500 0c-1.230 0-2.250.89-2.460 2.060C9.870 2.020 9.690 2 9.500 2 8.120 2 7 3.120 7 4.500v5.890c-.34-.31-.76-.54-1.220-.66L5.010 9.520c-.83-.23-1.700.09-2.190.83-.38.570-.4 1.310-.15 1.950l2.560 6.430C6.490 21.910 9.570 24 13 24c4.420 0 8-3.580 8-8V7zm-2 9c0 3.310-2.690 6-6 6-2.610 0-4.950-1.590-5.910-4.010l-2.600-6.540.53.140c.46.120.83.460 1 .9L7 15h2V4.500c0-.28.220-.5.500-.5s.5.220.5.500V12h2V2.500c0-.28.220-.5.500-.5s.5.220.5.500V12h2V4c0-.28.220-.5.500-.5s.5.220.5.500v8h2V7c0-.28.220-.5.500-.5s.5.220.5.500v9z"/></svg>
<div class="abs" style="left:973px;top:792.500px;width:38px;height:50px;border-radius:19px;background:#333537"></div>
<svg class="abs" style="left:980px;top:805.500px" width="24" height="24" viewBox="0 0 24 24"><path fill="#e3e3e3" d="M12 8c1.100 0 2-.9 2-2s-.9-2-2-2-2 .9-2 2 .9 2 2 2zm0 2c-1.100 0-2 .9-2 2s.9 2 2 2 2-.9 2-2-.9-2-2-2zm0 6c-1.100 0-2 .9-2 2s.9 2 2 2 2-.9 2-2-.9-2-2-2z"/></svg>
<div class="abs" style="left:1019px;top:792.500px;width:75.500px;height:50px;border-radius:25px;background:#dc362e"></div>
<svg class="abs" style="left:1044.500px;top:806.500px" width="24" height="24" viewBox="0 0 24 24"><path fill="#fff" d="M12 9c-1.600 0-3.150.25-4.600.72v3.100c0 .39-.23.740-.56.900-.98.490-1.870 1.120-2.660 1.850-.18.180-.43.280-.7.280-.28 0-.53-.11-.71-.29L.29 13.080c-.18-.17-.29-.42-.29-.7 0-.28.110-.53.290-.71C3.340 8.780 7.460 7 12 7s8.660 1.780 11.710 4.670c.18.180.29.430.29.710 0 .28-.11.530-.29.710l-2.480 2.480c-.18.180-.43.290-.71.290-.27 0-.52-.11-.7-.28-.79-.74-1.690-1.360-2.670-1.850-.33-.16-.56-.5-.56-.9v-3.100C15.150 9.250 13.600 9 12 9z"/></svg>
<!-- right icons -->
<svg class="abs" style="left:1400.500px;top:806px" width="24" height="24" viewBox="0 0 24 24"><path fill="#fff" d="M11 7h2v2h-2zm0 4h2v6h-2zm1-9C6.480 2 2 6.480 2 12s4.480 10 10 10 10-4.480 10-10S17.520 2 12 2zm0 18c-4.410 0-8-3.590-8-8s3.590-8 8-8 8 3.590 8 8-3.590 8-8 8z"/></svg>
<svg class="abs" style="left:1449.500px;top:805.500px" width="25" height="25" viewBox="0 0 24 24"><path fill="#fff" d="M9 13.750c-2.340 0-7 1.170-7 3.500V19h14v-1.750c0-2.330-4.660-3.500-7-3.500zM4.340 17c.84-.58 2.870-1.250 4.660-1.250s3.820.67 4.660 1.250H4.340zM9 12c1.930 0 3.500-1.570 3.500-3.500S10.930 5 9 5 5.500 6.570 5.500 8.500 7.070 12 9 12zm0-5c.83 0 1.500.67 1.500 1.500S9.830 10 9 10s-1.500-.67-1.500-1.500S8.170 7 9 7zm7.040 6.810c1.160.84 1.960 1.960 1.960 3.440V19h4v-1.750c0-2.020-3.500-3.170-5.960-3.440zM15 12c1.930 0 3.500-1.570 3.500-3.500S16.930 5 15 5c-.54 0-1.040.13-1.500.35.630.89 1 1.980 1 3.150s-.37 2.260-1 3.150c.46.220.96.350 1.500.35z"/></svg>
<div class="abs" style="left:1463px;top:785px;width:27.500px;height:17.500px;border-radius:9px;background:#5f6368;color:#fff;font-size:11.500px;font-weight:bold;line-height:17.500px;text-align:center">17</div>
<svg class="abs" style="left:1500px;top:805.500px" width="24" height="24" viewBox="0 0 24 24"><path fill="#fff" d="M4 4h16v12H5.170L4 17.170V4m0-2c-1.100 0-1.990.9-1.990 2L2 22l4-4h14c1.100 0 2-.9 2-2V4c0-1.100-.9-2-2-2H4zm2 10h8v2H6v-2zm0-3h12v2H6V9zm0-3h12v2H6V6z"/></svg>
<svg class="abs" style="left:1550.500px;top:805.500px" width="24" height="24" viewBox="0 0 24 24"><path fill="#fff" d="M12 2l-5.500 9h11L12 2zm0 3.840L13.930 9h-3.870L12 5.840zM17.500 13c-2.490 0-4.500 2.010-4.500 4.500s2.010 4.500 4.500 4.500 4.500-2.010 4.500-4.500-2.010-4.500-4.500-4.500zm0 7c-1.380 0-2.500-1.120-2.500-2.500s1.120-2.500 2.500-2.500 2.500 1.120 2.500 2.500-1.120 2.500-2.500 2.500zM3 21.500h8v-8H3v8zm2-6h4v4H5v-4z"/></svg>
<!-- /BOTTOM -->
<!-- TASKBAR -->
<div id="taskbar" class="abs"></div>
<svg class="abs" style="left:16px;top:870px" width="18" height="18" viewBox="0 0 18 18"><path fill="#fff" d="M0.500 3.300 L7.600 2.300 V8.500 H0.500Z M8.500 2.150 L17.700 .8 V8.500 H8.500Z M0.500 9.400 H7.600 V15.700 L0.500 14.700Z M8.500 9.400 H17.700 V17.200 L8.500 15.850Z"/></svg>
<div class="abs" style="left:50px;top:858.500px;width:300px;height:41.500px;background:#f2f2f2"></div>
<svg class="abs" style="left:61px;top:870px" width="20" height="19" viewBox="0 0 20 19"><circle cx="12.300" cy="6.800" r="5.300" fill="none" stroke="#222" stroke-width="1.400"/><path d="M8.600 10.700 L1.500 17.800" stroke="#222" stroke-width="1.500"/></svg>
<div class="abs" id="buscar" style="left:92px;top:869.200px;letter-spacing:-0.5px;font-size:15.800px;line-height:22px;color:#2b2b2b;white-space:nowrap">Buscar</div>
<!-- pen + squiggle -->
<svg class="abs" style="left:266px;top:860px" width="84" height="38" viewBox="0 0 84 38">
<path d="M40 29.500 L48.500 22.300 L56.500 28 L64 22.300 L71.500 28 L79.500 22" fill="none" stroke="#17123f" stroke-width="3.500" stroke-linejoin="miter"/>
<g transform="translate(5.500,4.600) rotate(39.400) scale(0.93,1)">
<rect x="-1" y="-4.200" width="8" height="7.400" rx="1.200" fill="#b9aade"/>
<rect x="1" y="-6" width="19" height="1.800" fill="#a39acb"/>
<rect x="6" y="-4.600" width="15" height="9.200" rx="2" fill="#f7c71f"/>
<path d="M20 -4.600 H33 L43 -1.500 V1.500 L33 4.600 H20Z" fill="#f3bb12"/>
<rect x="19.300" y="-4.800" width="2.400" height="9.600" fill="#d9980a"/>
<path d="M43 -1.600 L48.500 0 L43 1.600Z" fill="#45407a"/>
<rect x="8" y="-3" width="24" height="2" fill="#fce57f" opacity=".85"/>
</g>
</svg>
<!-- task view -->
<svg class="abs" style="left:365px;top:870px" width="21" height="18" viewBox="0 0 21 18"><g fill="none" stroke="#fff" stroke-width="1.200"><rect x="3.600" y="4.600" width="10" height="8.800"/><path d="M1.500 1.600 H3.600 V4 M15.700 1.600 H13.600 V4 M1.500 16.400 H3.600 V14 M15.700 16.400 H13.600 V14"/><path d="M17.800 1 V4 M17.800 6.200 V16.500"/></g></svg>
<!-- edge -->
<svg class="abs" style="left:415px;top:865px" width="27" height="27" viewBox="0 0 27 27"><defs><linearGradient id="eg1" x1="0" y1="0" x2="1" y2="1"><stop offset="0" stop-color="#2fc2e8"/><stop offset=".5" stop-color="#1a8fd8"/><stop offset="1" stop-color="#0c59a4"/></linearGradient><linearGradient id="eg2" x1="0" y1="0" x2="1" y2="0"><stop offset="0" stop-color="#35c1f1"/><stop offset=".6" stop-color="#5bd65e"/><stop offset="1" stop-color="#8ee04a"/></linearGradient></defs>
<circle cx="13.500" cy="13.500" r="12.400" fill="url(#eg1)"/>
<path d="M1.300 12 C2 5.500 7.500 1.100 13.800 1.100 C21 1.100 26 6.500 26 12 C26 15.500 23.500 17.800 20.500 17.800 C18 17.800 16.800 16.600 17.300 15.200 C18 13.500 17.500 9.800 13 9.600 C8 9.400 3 11.500 1.300 12Z" fill="url(#eg2)"/>
<path d="M10.500 13.500 C8.500 17 10.500 22.500 16 23.800 C19.500 24.600 22.500 23 24.500 20.500 C22 24.500 18 26 14 25.900 C7 25.500 4 19 6 14.500 C7 12.500 9 12 10.500 13.500Z" fill="#0b4f9b"/>
</svg>
<!-- explorer -->
<svg class="abs" style="left:467px;top:867px" width="26" height="23" viewBox="0 0 26 23"><path d="M1.500 3 a1 1 0 0 1 1 -1 H9 l2 2 H23.500 a1 1 0 0 1 1 1 V8 H1.500Z" fill="#f5b72b"/><rect x="1.500" y="6" width="23" height="15" rx="1" fill="#fcd462"/><path d="M7.500 21 V14.500 a1 1 0 0 1 1-1 H17.500 a1 1 0 0 1 1 1 V21 H16 V16.500 H10 V21Z" fill="#3b8ee0"/></svg>
<!-- excel -->
<svg class="abs" style="left:519px;top:867px" width="25" height="23" viewBox="0 0 25 23"><rect x="11" y="3" width="12.500" height="17" fill="#fff" stroke="#1e7145" stroke-width="1"/><g stroke="#1e7145" stroke-width="1.300"><path d="M14 6.500 H22 M14 9.500 H22 M14 12.500 H22 M14 15.500 H22 M18.500 4 V19"/></g><path d="M1 3.300 L14 1 V22 L1 19.700Z" fill="#1e7145"/><path d="M4.500 7.500 L10.500 15.700 M10.500 7.500 L4.500 15.700" stroke="#fff" stroke-width="1.900"/></svg>
<!-- ppt -->
<svg class="abs" style="left:571px;top:867px" width="25" height="23" viewBox="0 0 25 23"><rect x="11" y="3" width="12.500" height="17" fill="#fff" stroke="#d24726" stroke-width="1"/><circle cx="18.300" cy="9" r="3.300" fill="#d24726"/><path d="M14 14.500 H22 M14 17 H22" stroke="#d24726" stroke-width="1.300"/><path d="M1 3.300 L14 1 V22 L1 19.700Z" fill="#d24726"/><path d="M5.700 16.500 V7 H8.500 a2.600 2.600 0 0 1 0 5.400 H5.700" fill="none" stroke="#fff" stroke-width="1.900"/></svg>
<!-- word -->
<svg class="abs" style="left:622px;top:867px" width="25" height="23" viewBox="0 0 25 23"><rect x="11" y="3" width="12.500" height="17" fill="#fff" stroke="#2b579a" stroke-width="1"/><g stroke="#2b579a" stroke-width="1.300"><path d="M14 6.500 H22 M14 9.200 H22 M14 11.900 H22 M14 14.600 H22 M14 17.300 H22"/></g><path d="M1 3.300 L14 1 V22 L1 19.700Z" fill="#2b579a"/><path d="M3.300 7.700 L5.200 15.500 L7.500 8.500 L9.800 15.500 L11.700 7.700" fill="none" stroke="#fff" stroke-width="1.600"/></svg>
<!-- whatsapp -->
<svg class="abs" style="left:672px;top:865px" width="28" height="28" viewBox="0 0 28 28"><path d="M14 2.300 a11.200 11.200 0 0 0 -9.600 17 L2.500 25.700 L9.200 23.900 A11.200 11.200 0 1 0 14 2.300Z" fill="none" stroke="#25d366" stroke-width="2.400" stroke-linejoin="round"/><path d="M9.700 8.200 c-.5 0-1.400.8-1.400 2.300 c0 3 4.500 8.200 8.600 8.200 c1.500 0 2.600-1 2.600-1.900 c0-.6-2.400-1.800-2.900-1.800 c-.5 0-.9 1.200-1.400 1.200 c-1 0-4-2.600-4-3.700 c0-.5 1-1 1-1.600 c0-.4-.9-2.700-1.500-2.700Z" fill="#25d366"/></svg>
<div class="abs" style="left:665.500px;top:897.500px;width:42.500px;height:2.500px;background:#8bb8e6"></div>
<!-- chrome -->
<div class="abs" style="left:713px;top:858.500px;width:51px;height:41.500px;background:#43545d"></div>
<div class="abs" style="left:713px;top:897.500px;width:51px;height:2.500px;background:#8bb8e6"></div>
<svg class="abs" style="left:725px;top:865px" width="28" height="28" viewBox="0 0 28 28"><circle cx="13" cy="13" r="12" fill="#fff"/><path d="M13 13 L2.600 7 A12 12 0 0 1 23.400 7Z" fill="#ea4335"/><path d="M13 13 L23.400 7 A12 12 0 0 1 13 25Z" fill="#fbbc04"/><path d="M13 13 L13 25 A12 12 0 0 1 2.600 7Z" fill="#34a853"/><circle cx="13" cy="13" r="5.600" fill="#fff"/><circle cx="13" cy="13" r="4.400" fill="#4285f4"/><circle cx="20" cy="21" r="7" fill="#8d8a8b"/><rect x="17" y="19" width="6" height="8" rx="2.500" fill="#3c302d"/></svg>
<!-- news -->
<svg class="abs" style="left:1011px;top:866px" width="23" height="27" viewBox="0 0 23 27"><path d="M1 2.500 a2 2 0 0 1 2-2 H14.500 L21.800 7.500 V23.500 a2 2 0 0 1 -2 2 H3 a2 2 0 0 1 -2 -2Z" fill="#3fb5ee"/><path d="M14.500 .5 L21.800 7.500 H16.500 a2 2 0 0 1 -2 -2Z" fill="#8ad4f7"/><rect x="4" y="9.500" width="4" height="6.500" rx="1" fill="#1c7fd0"/><rect x="9.700" y="12.500" width="3.500" height="3.500" rx="1" fill="#1c7fd0"/><rect x="14.700" y="10.500" width="4" height="5.500" rx="1" fill="#1c7fd0"/><rect x="3.500" y="18" width="15.500" height="2" fill="#e9f6fd"/><rect x="3.500" y="21.300" width="15.500" height="2" fill="#e9f6fd"/></svg>
<div class="abs" id="prox" style="left:1043.500px;top:869px;font-size:15px;letter-spacing:-0.33px;line-height:22px;color:#fff;white-space:nowrap">Próximas ganancias</div>
<svg class="abs" style="left:1202px;top:874px" width="16" height="11" viewBox="0 0 16 11"><path d="M1.200 9 L8 2.200 L14.800 9" fill="none" stroke="#fff" stroke-width="1.300"/></svg>
<!-- cloud -->
<svg class="abs" style="left:1234px;top:872px" width="20" height="18" viewBox="0 0 20 18"><path d="M4.500 13.500 a3.500 3.500 0 0 1 .3-7 a5 5 0 0 1 9.200-1 a4 4 0 0 1 1.500 7.700Z" fill="#c9ced6"/><path d="M1 10 a3.300 3.300 0 0 1 3.300 -3.300 a4.500 4.500 0 0 1 6 2 L9 13.500 H4 A3.300 3.300 0 0 1 1 10Z" fill="#f4f6f8"/><circle cx="13" cy="12.300" r="4.600" fill="#f2d21b"/><rect x="12.300" y="9.300" width="1.400" height="3.800" fill="#222"/><rect x="12.300" y="14" width="1.400" height="1.400" fill="#222"/></svg>
<!-- mic -->
<svg class="abs" style="left:1269px;top:869px" width="14" height="20" viewBox="0 0 14 20"><rect x="3.700" y="1.500" width="6.600" height="11.500" rx="2" fill="#fff"/><path d="M1.800 9.500 V11 a5.200 5.200 0 0 0 10.400 0 V9.500 M7 16.200 V18.200 M4 18.500 H10" fill="none" stroke="#c8ccd2" stroke-width="1.100"/></svg>
<!-- screen -->
<svg class="abs" style="left:1299px;top:869px" width="24" height="20" viewBox="0 0 24 20"><path d="M2.300 3.600 L18.700 2 V15.200 L2.300 16.600Z" fill="none" stroke="#fff" stroke-width="1.300"/><path d="M7.500 12 V8.500 H11 M13.500 6 V9.500 H10.200" fill="none" stroke="#fff" stroke-width="1.100"/><circle cx="15.800" cy="15" r="3.800" fill="#ff9a0d"/></svg>
<!-- battery -->
<svg class="abs" style="left:1334px;top:873px" width="20" height="13" viewBox="0 0 20 13"><rect x="1.600" y="2" width="15" height="9.300" rx="1" fill="none" stroke="#fff" stroke-width="1.200"/><rect x="3.300" y="3.800" width="8" height="5.700" fill="#fff"/><rect x="17.200" y="4.800" width="1.600" height="3.800" fill="#fff"/></svg>
<!-- wifi -->
<svg class="abs" style="left:1368px;top:871px" width="18" height="17" viewBox="0 0 18 17"><g fill="none" stroke-width="1.300"><path d="M2.800 15 A12.500 12.500 0 0 1 15.300 2.500" stroke="#fff"/><path d="M6.600 15 A8.700 8.700 0 0 1 15.300 6.300" stroke="#fff"/><path d="M10.400 15 A4.900 4.900 0 0 1 15.300 10.100" stroke="#fff"/></g><circle cx="14.300" cy="14" r="1.500" fill="#fff"/></svg>
<!-- volume -->
<svg class="abs" style="left:1399px;top:870px" width="22" height="19" viewBox="0 0 22 19"><path d="M2 6.800 H5 L9 3 V16 L5 12.200 H2Z" fill="none" stroke="#fff" stroke-width="1.200"/><path d="M11.500 7 a3.500 3.500 0 0 1 0 5" fill="none" stroke="#fff" stroke-width="1.100"/><path d="M14 4.500 a7 7 0 0 1 0 10" fill="none" stroke="#7f8793" stroke-width="1.100"/><path d="M16.700 2.200 a10.300 10.300 0 0 1 0 14.600" fill="none" stroke="#5d6674" stroke-width="1.100"/></svg>
<!-- pen -->
<svg class="abs" style="left:1437px;top:869px" width="21" height="21" viewBox="0 0 21 21"><g fill="none" stroke="#fff" stroke-width="1.300"><path d="M11.300 3.800 L13.300 2.200 a1.700 1.700 0 0 1 2.500 2.500 L8 17.300 L4.300 18.300 L5.200 14.600Z" transform="rotate(8 10 10)"/><path d="M9 10.500 C5 9 1.500 11 2.300 14.200 C3 16.800 6 16.500 7 15.800"/><path d="M14.500 7.500 C17.500 7.300 19.800 9 19 11.300 C18.500 12.700 17 13.200 15.300 12.700"/></g></svg>
<div class="abs" id="tbtime" style="left:1456px;top:861.700px;width:101px;text-align:center;letter-spacing:-0.3px;font-size:12.400px;line-height:17px;color:#fff;white-space:nowrap">08:10 a. m.</div>
<div class="abs" id="tbdate" style="left:1456px;top:880.600px;width:101px;text-align:center;letter-spacing:0.23px;font-size:12.400px;line-height:17px;color:#fff;white-space:nowrap">26/11/2024</div>
<!-- notif -->
<svg class="abs" style="left:1556px;top:869px" width="28" height="28" viewBox="0 0 28 28"><path d="M1.500 2 H18.500 V15 H7 L3.500 18.500 V15 H1.500Z" fill="#fff"/><g stroke="#1b2a43" stroke-width="1.100"><path d="M4 5.500 H16 M4 8.500 H16 M4 11.500 H16"/></g><circle cx="17.500" cy="17.800" r="7.800" fill="#23262d" stroke="#15233a" stroke-width="1"/></svg>
<div class="abs" style="left:1566px;top:878.500px;width:15px;text-align:center;font-size:12.500px;line-height:17px;color:#fff;font-weight:bold">2</div>
<div class="abs" style="left:1595px;top:858px;width:1px;height:42px;background:#7c8590"></div>
</div>
</body>
</html>
